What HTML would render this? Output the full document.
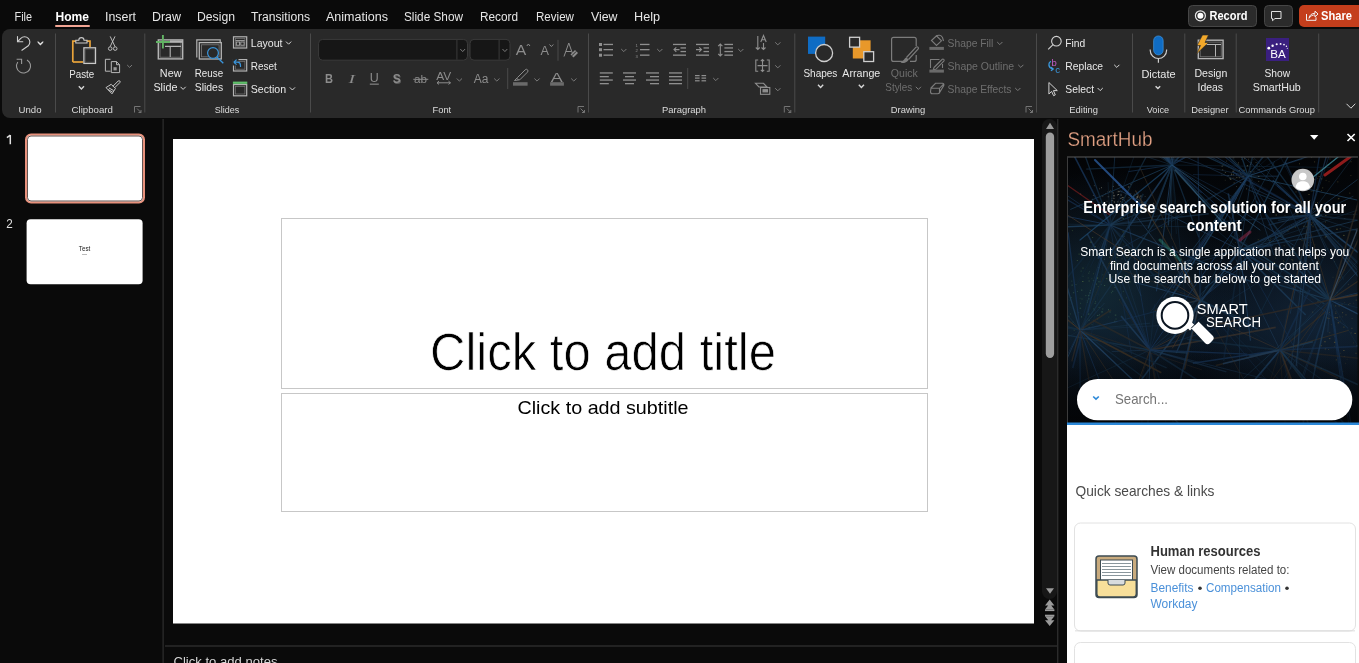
<!DOCTYPE html>
<html><head><meta charset="utf-8"><title>PowerPoint</title>
<style>
html,body{margin:0;padding:0;background:#0a0a0a;overflow:hidden;width:1359px;height:663px}
svg{display:block;font-family:"Liberation Sans",sans-serif;will-change:transform}
</style></head><body>
<svg width="1359" height="663" viewBox="0 0 1359 663">
<rect x="0" y="0" width="1359" height="663" fill="#0a0a0a"/>
<!-- ribbon -->
<path d="M10,29 H1359 V118 H10 A8,8 0 0 1 2,110 V37 A8,8 0 0 1 10,29 Z" fill="#292929"/>
<!-- menu tabs -->
<g fill="#e6e6e6" font-size="12.5">
<text x="14.5" y="20.5" textLength="17.5" lengthAdjust="spacingAndGlyphs">File</text>
<text x="55.5" y="20.5" textLength="33.5" lengthAdjust="spacingAndGlyphs" font-weight="bold" fill="#ffffff">Home</text>
<text x="105" y="20.5" textLength="31" lengthAdjust="spacingAndGlyphs">Insert</text>
<text x="152" y="20.5" textLength="29" lengthAdjust="spacingAndGlyphs">Draw</text>
<text x="197" y="20.5" textLength="38" lengthAdjust="spacingAndGlyphs">Design</text>
<text x="251" y="20.5" textLength="59" lengthAdjust="spacingAndGlyphs">Transitions</text>
<text x="326" y="20.5" textLength="62" lengthAdjust="spacingAndGlyphs">Animations</text>
<text x="404" y="20.5" textLength="59" lengthAdjust="spacingAndGlyphs">Slide Show</text>
<text x="480" y="20.5" textLength="38" lengthAdjust="spacingAndGlyphs">Record</text>
<text x="536" y="20.5" textLength="38" lengthAdjust="spacingAndGlyphs">Review</text>
<text x="591" y="20.5" textLength="26.5" lengthAdjust="spacingAndGlyphs">View</text>
<text x="634" y="20.5" textLength="26" lengthAdjust="spacingAndGlyphs">Help</text>
</g>
<rect x="55" y="25" width="35" height="2" rx="1" fill="#f2a594"/>
<!-- Record / comment / share buttons -->
<rect x="1188.5" y="5.5" width="68" height="21" rx="4" fill="#2b2b2b" stroke="#464646"/>
<circle cx="1200.4" cy="15.8" r="5" fill="none" stroke="#e6e6e6" stroke-width="1.2"/>
<circle cx="1200.4" cy="15.8" r="3" fill="#ffffff"/>
<text x="1209.5" y="20.2" font-size="12.5" font-weight="bold" fill="#ffffff" textLength="38" lengthAdjust="spacingAndGlyphs">Record</text>
<rect x="1264.5" y="5.5" width="28" height="21" rx="4" fill="#2b2b2b" stroke="#464646"/>
<path d="M1271.5,11.5 h9.5 v7 h-6 l-2.5,2.2 v-2.2 h-1 z" fill="none" stroke="#e0e0e0" stroke-width="1"/>
<rect x="1299" y="5" width="70" height="22" rx="5" fill="#c43e1c"/>
<g fill="none" stroke="#f0f0f0" stroke-width="1">
<path d="M1306.5,14 v6.3 h9.5 v-3"/>
<path d="M1309,18.3 c0.5,-3.5 3,-5 6,-5 v-2.2 l3,2.9 l-3,2.9 v-2 c-2.5,0 -4.5,1 -6,3.4z"/>
</g>
<text x="1321" y="20.2" font-size="12.5" font-weight="bold" fill="#ffffff" textLength="31" lengthAdjust="spacingAndGlyphs">Share</text>

<!-- slides pane divider -->
<rect x="162.6" y="119" width="1" height="544" fill="#353535"/>
<!-- thumbnails -->
<path d="M10.3,135 V144.3 M6.9,137.6 L10.3,135.2" fill="none" stroke="#e0e0e0" stroke-width="1.5"/>
<rect x="26" y="134.5" width="118" height="68" rx="5" fill="#ffffff" stroke="#e8917c" stroke-width="2"/>
<rect x="27.5" y="136" width="115" height="65" rx="3.5" fill="none" stroke="#3a2a26" stroke-width="0.8"/>
<text x="6.3" y="228" font-size="12.5" fill="#e0e0e0" textLength="6.5" lengthAdjust="spacingAndGlyphs">2</text>
<rect x="26.6" y="219.3" width="116" height="65" rx="4" fill="#ffffff"/>
<text x="78.8" y="251" font-size="6.5" fill="#222" textLength="11.5" lengthAdjust="spacingAndGlyphs">Test</text>
<rect x="82" y="254" width="5" height="1" fill="#bbb"/>
<!-- slide -->
<rect x="173" y="139" width="861" height="484.5" fill="#ffffff"/>
<rect x="281.5" y="218.5" width="646" height="170" fill="none" stroke="#8f8f8f" stroke-width="1" stroke-dasharray="1,1"/>
<rect x="281.5" y="393.5" width="646" height="118" fill="none" stroke="#8f8f8f" stroke-width="1" stroke-dasharray="1,1"/>
<text x="430" y="369.8" font-size="51" fill="#000" stroke="#fff" stroke-width="0.7" textLength="346" lengthAdjust="spacingAndGlyphs">Click to add title</text>
<text x="517.5" y="414" font-size="18.5" fill="#000" textLength="171" lengthAdjust="spacingAndGlyphs">Click to add subtitle</text>
<!-- scrollbar -->
<rect x="1042" y="119" width="15" height="480" rx="7.5" fill="#171717"/>
<path d="M1046,129 L1050,122.8 L1054,129 Z" fill="#9a9a9a"/>
<rect x="1045.8" y="132.5" width="8.3" height="225.5" rx="4.15" fill="#9e9e9e"/>
<path d="M1046,588.3 L1054,588.3 L1050,593.8 Z" fill="#9a9a9a"/>
<path d="M1045,605.5 L1049.7,599.6 L1054.4,605.5 Z M1045,609.5 L1049.7,603.6 L1054.4,609.5 Z" fill="#9a9a9a"/><rect x="1045" y="609.5" width="9.4" height="1.6" fill="#9a9a9a"/>
<rect x="1045" y="614.7" width="9.4" height="1.6" fill="#9a9a9a"/><path d="M1045,616.2 L1054.4,616.2 L1049.7,622 Z M1045,620.2 L1054.4,620.2 L1049.7,626 Z" fill="#9a9a9a"/>
<!-- editor / pane divider -->
<rect x="1057.3" y="119" width="1" height="544" fill="#3a3a3a"/>
<!-- notes -->
<rect x="165" y="645.5" width="892" height="1" fill="#3a3a3a"/>
<text x="173.5" y="666" font-size="13.5" fill="#d6d6d6" textLength="104" lengthAdjust="spacingAndGlyphs">Click to add notes</text>

<!-- Font boxes -->
<rect x="318.6" y="39.4" width="148.9" height="20.8" rx="4" fill="#161616" stroke="#3a3a3a" stroke-width="1"/>
<rect x="456.4" y="40" width="1" height="19.6" fill="#3a3a3a"/>
<rect x="470" y="39.4" width="40" height="20.8" rx="4" fill="#161616" stroke="#3a3a3a" stroke-width="1"/>
<rect x="498.6" y="40" width="1" height="19.6" fill="#3a3a3a"/>

<defs><clipPath id="heroclip"><rect x="1067.5" y="157" width="290" height="267"/></clipPath>
<linearGradient id="herog" x1="0" y1="0" x2="0" y2="1"><stop offset="0" stop-color="#030406"/><stop offset="0.3" stop-color="#05090e"/><stop offset="0.65" stop-color="#091420"/><stop offset="0.88" stop-color="#060b12"/><stop offset="1" stop-color="#030507"/></linearGradient>
<radialGradient id="heror" cx="0.12" cy="0.5" r="0.45"><stop offset="0" stop-color="#1a3a48" stop-opacity="0.55"/><stop offset="1" stop-color="#1a3048" stop-opacity="0"/></radialGradient>
<radialGradient id="heror2" cx="0.85" cy="0.6" r="0.45"><stop offset="0" stop-color="#1a3048" stop-opacity="0.5"/><stop offset="1" stop-color="#1a3048" stop-opacity="0"/></radialGradient></defs>
<rect x="1067.5" y="157" width="290" height="267" fill="url(#herog)"/>
<g clip-path="url(#heroclip)">
<rect x="1067.5" y="157" width="290" height="267" fill="url(#heror)"/>
<rect x="1067.5" y="157" width="290" height="267" fill="url(#heror2)"/>
<rect x="1082.5" y="267.6" width="1" height="1" fill="#6a8a4a" opacity="0.48"/>
<rect x="1097.7" y="253.3" width="1.5" height="1" fill="#6a8a4a" opacity="0.53"/>
<rect x="1112.7" y="251.4" width="1" height="0.8" fill="#6a8a4a" opacity="0.29"/>
<rect x="1122.7" y="231.4" width="0.8" height="1" fill="#6a8a4a" opacity="0.68"/>
<rect x="1092.3" y="237.2" width="0.8" height="0.8" fill="#6a8a4a" opacity="0.62"/>
<rect x="1115.6" y="262.1" width="0.8" height="0.8" fill="#6a8a4a" opacity="0.60"/>
<rect x="1096.1" y="283.7" width="0.8" height="0.8" fill="#6a8a4a" opacity="0.54"/>
<rect x="1076.8" y="260.0" width="1" height="1" fill="#6a8a4a" opacity="0.43"/>
<rect x="1060.6" y="245.3" width="0.8" height="1" fill="#6a8a4a" opacity="0.39"/>
<rect x="1112.4" y="276.4" width="0.8" height="0.8" fill="#6a8a4a" opacity="0.43"/>
<rect x="1122.7" y="243.8" width="0.8" height="0.8" fill="#6a8a4a" opacity="0.35"/>
<rect x="1116.6" y="257.1" width="1" height="1" fill="#6a8a4a" opacity="0.44"/>
<rect x="1096.3" y="254.6" width="1.5" height="1" fill="#6a8a4a" opacity="0.40"/>
<rect x="1108.5" y="263.2" width="1" height="0.8" fill="#6a8a4a" opacity="0.31"/>
<rect x="1109.1" y="257.1" width="1" height="1" fill="#6a8a4a" opacity="0.33"/>
<rect x="1087.2" y="252.1" width="0.8" height="0.8" fill="#6a8a4a" opacity="0.44"/>
<rect x="1093.2" y="273.4" width="0.8" height="0.8" fill="#6a8a4a" opacity="0.37"/>
<rect x="1149.9" y="253.4" width="1" height="0.8" fill="#6a8a4a" opacity="0.34"/>
<rect x="1075.2" y="284.2" width="1.5" height="0.8" fill="#6a8a4a" opacity="0.27"/>
<rect x="1124.7" y="277.2" width="0.8" height="1" fill="#6a8a4a" opacity="0.62"/>
<rect x="1103.3" y="265.2" width="0.8" height="0.8" fill="#6a8a4a" opacity="0.26"/>
<rect x="1088.7" y="280.5" width="0.8" height="1" fill="#6a8a4a" opacity="0.62"/>
<rect x="1124.6" y="274.9" width="1.5" height="0.8" fill="#6a8a4a" opacity="0.39"/>
<rect x="1114.2" y="287.2" width="1.5" height="0.8" fill="#6a8a4a" opacity="0.32"/>
<rect x="1090.3" y="241.6" width="1.5" height="1" fill="#6a8a4a" opacity="0.65"/>
<rect x="1091.3" y="247.3" width="0.8" height="0.8" fill="#6a8a4a" opacity="0.27"/>
<rect x="1126.2" y="256.6" width="1.5" height="1" fill="#6a8a4a" opacity="0.37"/>
<rect x="1123.5" y="235.9" width="1" height="0.8" fill="#6a8a4a" opacity="0.67"/>
<rect x="1121.6" y="258.5" width="1" height="0.8" fill="#6a8a4a" opacity="0.38"/>
<rect x="1123.2" y="253.3" width="0.8" height="0.8" fill="#6a8a4a" opacity="0.37"/>
<rect x="1102.5" y="262.4" width="0.8" height="1" fill="#6a8a4a" opacity="0.42"/>
<rect x="1099.3" y="255.3" width="1" height="0.8" fill="#6a8a4a" opacity="0.65"/>
<rect x="1142.7" y="256.4" width="1.5" height="0.8" fill="#6a8a4a" opacity="0.52"/>
<rect x="1132.6" y="249.5" width="1" height="1" fill="#6a8a4a" opacity="0.68"/>
<rect x="1141.7" y="263.8" width="1" height="0.8" fill="#6a8a4a" opacity="0.58"/>
<rect x="1073.8" y="329.6" width="0.8" height="1" fill="#6a8a4a" opacity="0.50"/>
<rect x="1106.1" y="217.2" width="1.5" height="0.8" fill="#6a8a4a" opacity="0.61"/>
<rect x="1128.0" y="250.5" width="1.5" height="1" fill="#6a8a4a" opacity="0.66"/>
<rect x="1126.1" y="244.9" width="0.8" height="1" fill="#6a8a4a" opacity="0.51"/>
<rect x="1094.4" y="246.1" width="1.5" height="0.8" fill="#6a8a4a" opacity="0.52"/>
<rect x="1138.1" y="273.8" width="1" height="1" fill="#6a8a4a" opacity="0.58"/>
<rect x="1082.0" y="281.0" width="1.5" height="1" fill="#6a8a4a" opacity="0.45"/>
<rect x="1115.0" y="252.9" width="1.5" height="0.8" fill="#6a8a4a" opacity="0.39"/>
<rect x="1114.1" y="262.2" width="1.5" height="0.8" fill="#6a8a4a" opacity="0.47"/>
<rect x="1071.9" y="230.3" width="1" height="0.8" fill="#6a8a4a" opacity="0.42"/>
<rect x="1129.2" y="281.5" width="1.5" height="0.8" fill="#6a8a4a" opacity="0.59"/>
<rect x="1081.5" y="298.6" width="1" height="0.8" fill="#6a8a4a" opacity="0.40"/>
<rect x="1102.5" y="248.5" width="1" height="0.8" fill="#6a8a4a" opacity="0.65"/>
<rect x="1087.7" y="277.6" width="1" height="0.8" fill="#6a8a4a" opacity="0.31"/>
<rect x="1067.1" y="260.8" width="0.8" height="0.8" fill="#6a8a4a" opacity="0.68"/>
<rect x="1107.7" y="272.0" width="1" height="1" fill="#6a8a4a" opacity="0.37"/>
<rect x="1115.2" y="280.2" width="1.5" height="1" fill="#6a8a4a" opacity="0.55"/>
<rect x="1100.9" y="222.4" width="1.5" height="1" fill="#6a8a4a" opacity="0.39"/>
<rect x="1118.6" y="245.8" width="1.5" height="0.8" fill="#6a8a4a" opacity="0.56"/>
<rect x="1105.9" y="278.3" width="1.5" height="0.8" fill="#6a8a4a" opacity="0.54"/>
<rect x="1097.9" y="267.3" width="1" height="0.8" fill="#6a8a4a" opacity="0.60"/>
<rect x="1128.8" y="205.0" width="0.8" height="1" fill="#6a8a4a" opacity="0.30"/>
<rect x="1078.6" y="253.7" width="1" height="0.8" fill="#6a8a4a" opacity="0.56"/>
<rect x="1118.0" y="281.6" width="0.8" height="0.8" fill="#6a8a4a" opacity="0.59"/>
<rect x="1104.0" y="258.8" width="0.8" height="1" fill="#6a8a4a" opacity="0.60"/>
<rect x="1057.2" y="248.0" width="1.5" height="0.8" fill="#6a8a4a" opacity="0.43"/>
<rect x="1122.7" y="218.0" width="0.8" height="1" fill="#6a8a4a" opacity="0.67"/>
<rect x="1108.0" y="249.6" width="1" height="0.8" fill="#6a8a4a" opacity="0.53"/>
<rect x="1128.5" y="249.6" width="1.5" height="1" fill="#6a8a4a" opacity="0.46"/>
<rect x="1101.1" y="249.0" width="1.5" height="0.8" fill="#6a8a4a" opacity="0.35"/>
<rect x="1161.1" y="227.0" width="1" height="1" fill="#6a8a4a" opacity="0.37"/>
<rect x="1109.2" y="256.5" width="1.5" height="0.8" fill="#6a8a4a" opacity="0.27"/>
<rect x="1097.1" y="277.5" width="1" height="1" fill="#6a8a4a" opacity="0.66"/>
<rect x="1119.0" y="299.4" width="1" height="0.8" fill="#6a8a4a" opacity="0.33"/>
<rect x="1089.8" y="290.3" width="0.8" height="1" fill="#6a8a4a" opacity="0.32"/>
<rect x="1066.1" y="297.5" width="1.5" height="1" fill="#4a7a5a" opacity="0.68"/>
<rect x="1053.4" y="301.7" width="0.8" height="0.8" fill="#4a7a5a" opacity="0.45"/>
<rect x="1063.6" y="289.8" width="1.5" height="0.8" fill="#4a7a5a" opacity="0.49"/>
<rect x="1100.7" y="284.0" width="1" height="1" fill="#4a7a5a" opacity="0.68"/>
<rect x="1104.1" y="285.0" width="1" height="0.8" fill="#4a7a5a" opacity="0.69"/>
<rect x="1070.7" y="297.0" width="0.8" height="1" fill="#4a7a5a" opacity="0.49"/>
<rect x="1069.6" y="299.6" width="0.8" height="0.8" fill="#4a7a5a" opacity="0.48"/>
<rect x="1068.1" y="315.8" width="1.5" height="0.8" fill="#4a7a5a" opacity="0.47"/>
<rect x="1088.0" y="294.8" width="1.5" height="1" fill="#4a7a5a" opacity="0.44"/>
<rect x="1122.8" y="290.9" width="1" height="0.8" fill="#4a7a5a" opacity="0.46"/>
<rect x="1101.2" y="311.4" width="1" height="1" fill="#4a7a5a" opacity="0.30"/>
<rect x="1086.8" y="301.8" width="1" height="0.8" fill="#4a7a5a" opacity="0.57"/>
<rect x="1094.0" y="299.4" width="0.8" height="0.8" fill="#4a7a5a" opacity="0.26"/>
<rect x="1084.9" y="323.5" width="0.8" height="1" fill="#4a7a5a" opacity="0.30"/>
<rect x="1089.1" y="292.4" width="1.5" height="1" fill="#4a7a5a" opacity="0.57"/>
<rect x="1080.7" y="270.6" width="0.8" height="1" fill="#4a7a5a" opacity="0.53"/>
<rect x="1099.4" y="281.5" width="1.5" height="0.8" fill="#4a7a5a" opacity="0.64"/>
<rect x="1079.7" y="297.8" width="0.8" height="0.8" fill="#4a7a5a" opacity="0.35"/>
<rect x="1088.4" y="272.7" width="0.8" height="1" fill="#4a7a5a" opacity="0.52"/>
<rect x="1097.6" y="293.7" width="0.8" height="0.8" fill="#4a7a5a" opacity="0.31"/>
<rect x="1091.6" y="324.1" width="1" height="1" fill="#4a7a5a" opacity="0.29"/>
<rect x="1097.7" y="286.3" width="1.5" height="0.8" fill="#4a7a5a" opacity="0.34"/>
<rect x="1071.4" y="280.7" width="0.8" height="0.8" fill="#4a7a5a" opacity="0.51"/>
<rect x="1072.6" y="321.7" width="1" height="0.8" fill="#4a7a5a" opacity="0.57"/>
<rect x="1080.9" y="289.7" width="1.5" height="0.8" fill="#4a7a5a" opacity="0.61"/>
<rect x="1086.7" y="300.4" width="1.5" height="1" fill="#4a7a5a" opacity="0.32"/>
<rect x="1094.1" y="309.3" width="0.8" height="1" fill="#4a7a5a" opacity="0.67"/>
<rect x="1094.4" y="303.0" width="1.5" height="1" fill="#4a7a5a" opacity="0.28"/>
<rect x="1102.3" y="308.5" width="1" height="1" fill="#4a7a5a" opacity="0.44"/>
<rect x="1088.0" y="298.5" width="1.5" height="0.8" fill="#4a7a5a" opacity="0.63"/>
<rect x="1096.9" y="315.0" width="1.5" height="1" fill="#4a7a5a" opacity="0.43"/>
<rect x="1093.0" y="308.5" width="1.5" height="0.8" fill="#4a7a5a" opacity="0.40"/>
<rect x="1114.8" y="314.6" width="1.5" height="1" fill="#4a7a5a" opacity="0.51"/>
<rect x="1097.2" y="318.5" width="1" height="1" fill="#4a7a5a" opacity="0.38"/>
<rect x="1108.4" y="316.5" width="0.8" height="1" fill="#4a7a5a" opacity="0.31"/>
<rect x="1081.0" y="316.4" width="1" height="1" fill="#4a7a5a" opacity="0.59"/>
<rect x="1070.1" y="313.4" width="0.8" height="1" fill="#4a7a5a" opacity="0.39"/>
<rect x="1115.3" y="318.6" width="1.5" height="0.8" fill="#4a7a5a" opacity="0.35"/>
<rect x="1110.9" y="292.4" width="1" height="0.8" fill="#4a7a5a" opacity="0.55"/>
<rect x="1073.2" y="292.2" width="1" height="1" fill="#4a7a5a" opacity="0.54"/>
<rect x="1082.3" y="275.8" width="1.5" height="0.8" fill="#4a7a5a" opacity="0.30"/>
<rect x="1098.6" y="306.9" width="1" height="1" fill="#4a7a5a" opacity="0.48"/>
<rect x="1091.5" y="278.4" width="0.8" height="0.8" fill="#4a7a5a" opacity="0.37"/>
<rect x="1087.8" y="313.5" width="1.5" height="1" fill="#4a7a5a" opacity="0.69"/>
<rect x="1045.5" y="279.7" width="1.5" height="1" fill="#4a7a5a" opacity="0.61"/>
<rect x="1108.0" y="309.3" width="0.8" height="1" fill="#4a7a5a" opacity="0.67"/>
<rect x="1099.1" y="314.3" width="0.8" height="1" fill="#4a7a5a" opacity="0.49"/>
<rect x="1076.9" y="290.9" width="1" height="1" fill="#4a7a5a" opacity="0.38"/>
<rect x="1079.6" y="307.7" width="1.5" height="1" fill="#4a7a5a" opacity="0.47"/>
<rect x="1085.7" y="334.3" width="1.5" height="1" fill="#4a7a5a" opacity="0.26"/>
<rect x="1092.8" y="280.3" width="1.5" height="0.8" fill="#4a7a5a" opacity="0.43"/>
<rect x="1088.0" y="295.5" width="1" height="1" fill="#4a7a5a" opacity="0.27"/>
<rect x="1126.0" y="297.5" width="0.8" height="0.8" fill="#4a7a5a" opacity="0.44"/>
<rect x="1050.0" y="305.7" width="0.8" height="0.8" fill="#4a7a5a" opacity="0.49"/>
<rect x="1112.2" y="290.8" width="1" height="0.8" fill="#4a7a5a" opacity="0.69"/>
<rect x="1098.3" y="281.4" width="0.8" height="0.8" fill="#4a7a5a" opacity="0.53"/>
<rect x="1080.3" y="302.8" width="0.8" height="1" fill="#4a7a5a" opacity="0.49"/>
<rect x="1101.5" y="311.4" width="1.5" height="1" fill="#4a7a5a" opacity="0.45"/>
<rect x="1088.5" y="319.8" width="1" height="1" fill="#4a7a5a" opacity="0.60"/>
<rect x="1038.8" y="290.0" width="1" height="0.8" fill="#4a7a5a" opacity="0.36"/>
<rect x="1113.9" y="320.8" width="1.5" height="1" fill="#4a7a5a" opacity="0.37"/>
<rect x="1071.4" y="284.7" width="1.5" height="0.8" fill="#4a7a5a" opacity="0.53"/>
<rect x="1090.2" y="290.3" width="0.8" height="0.8" fill="#4a7a5a" opacity="0.65"/>
<rect x="1095.1" y="301.3" width="1" height="1" fill="#4a7a5a" opacity="0.44"/>
<rect x="1085.0" y="295.1" width="1.5" height="1" fill="#4a7a5a" opacity="0.28"/>
<rect x="1109.3" y="311.6" width="1.5" height="0.8" fill="#4a7a5a" opacity="0.53"/>
<rect x="1078.0" y="312.2" width="0.8" height="1" fill="#4a7a5a" opacity="0.40"/>
<rect x="1089.1" y="271.4" width="0.8" height="0.8" fill="#4a7a5a" opacity="0.45"/>
<rect x="1102.5" y="274.3" width="0.8" height="1" fill="#4a7a5a" opacity="0.44"/>
<rect x="1088.6" y="327.3" width="1" height="0.8" fill="#4a7a5a" opacity="0.54"/>
<rect x="1337.7" y="198.5" width="1.5" height="0.8" fill="#7a7040" opacity="0.44"/>
<rect x="1313.8" y="208.3" width="1" height="0.8" fill="#7a7040" opacity="0.49"/>
<rect x="1296.4" y="213.4" width="1.5" height="1" fill="#7a7040" opacity="0.38"/>
<rect x="1321.3" y="190.2" width="0.8" height="0.8" fill="#7a7040" opacity="0.56"/>
<rect x="1286.0" y="201.4" width="1" height="1" fill="#7a7040" opacity="0.65"/>
<rect x="1325.7" y="235.9" width="1" height="1" fill="#7a7040" opacity="0.66"/>
<rect x="1310.5" y="224.2" width="1.5" height="1" fill="#7a7040" opacity="0.45"/>
<rect x="1325.6" y="179.9" width="1" height="0.8" fill="#7a7040" opacity="0.43"/>
<rect x="1358.9" y="178.8" width="0.8" height="0.8" fill="#7a7040" opacity="0.41"/>
<rect x="1307.4" y="217.8" width="1" height="1" fill="#7a7040" opacity="0.61"/>
<rect x="1318.7" y="176.1" width="1" height="0.8" fill="#7a7040" opacity="0.63"/>
<rect x="1308.5" y="194.0" width="1" height="1" fill="#7a7040" opacity="0.62"/>
<rect x="1321.2" y="208.5" width="0.8" height="1" fill="#7a7040" opacity="0.68"/>
<rect x="1299.0" y="163.3" width="0.8" height="1" fill="#7a7040" opacity="0.60"/>
<rect x="1327.1" y="205.2" width="1.5" height="0.8" fill="#7a7040" opacity="0.65"/>
<rect x="1344.4" y="218.0" width="0.8" height="0.8" fill="#7a7040" opacity="0.59"/>
<rect x="1311.1" y="184.9" width="0.8" height="1" fill="#7a7040" opacity="0.59"/>
<rect x="1286.3" y="194.3" width="1" height="1" fill="#7a7040" opacity="0.40"/>
<rect x="1349.3" y="192.6" width="1" height="1" fill="#7a7040" opacity="0.49"/>
<rect x="1314.3" y="161.4" width="0.8" height="1" fill="#7a7040" opacity="0.59"/>
<rect x="1338.5" y="197.9" width="0.8" height="1" fill="#7a7040" opacity="0.63"/>
<rect x="1358.5" y="159.5" width="1.5" height="0.8" fill="#7a7040" opacity="0.49"/>
<rect x="1311.1" y="156.4" width="1" height="1" fill="#7a7040" opacity="0.66"/>
<rect x="1320.3" y="214.9" width="1.5" height="1" fill="#7a7040" opacity="0.56"/>
<rect x="1311.4" y="222.4" width="1.5" height="1" fill="#7a7040" opacity="0.37"/>
<rect x="1337.0" y="181.5" width="1.5" height="0.8" fill="#7a7040" opacity="0.39"/>
<rect x="1345.1" y="246.5" width="0.8" height="1" fill="#7a7040" opacity="0.26"/>
<rect x="1284.3" y="205.3" width="1" height="0.8" fill="#7a7040" opacity="0.34"/>
<rect x="1303.1" y="225.8" width="1.5" height="1" fill="#7a7040" opacity="0.52"/>
<rect x="1322.1" y="215.8" width="1" height="1" fill="#7a7040" opacity="0.33"/>
<rect x="1320.8" y="178.4" width="1.5" height="1" fill="#7a7040" opacity="0.63"/>
<rect x="1299.8" y="202.4" width="1" height="0.8" fill="#7a7040" opacity="0.47"/>
<rect x="1321.2" y="207.9" width="0.8" height="1" fill="#7a7040" opacity="0.69"/>
<rect x="1329.6" y="158.6" width="0.8" height="0.8" fill="#7a7040" opacity="0.65"/>
<rect x="1350.5" y="161.4" width="1" height="0.8" fill="#7a7040" opacity="0.57"/>
<rect x="1310.8" y="191.0" width="0.8" height="1" fill="#7a7040" opacity="0.32"/>
<rect x="1350.5" y="175.1" width="0.8" height="1" fill="#7a7040" opacity="0.48"/>
<rect x="1344.6" y="210.6" width="0.8" height="0.8" fill="#7a7040" opacity="0.34"/>
<rect x="1329.8" y="192.9" width="0.8" height="0.8" fill="#7a7040" opacity="0.41"/>
<rect x="1301.6" y="179.8" width="1" height="1" fill="#7a7040" opacity="0.29"/>
<rect x="1319.8" y="168.7" width="1.5" height="1" fill="#7a7040" opacity="0.26"/>
<rect x="1325.0" y="215.1" width="1.5" height="0.8" fill="#7a7040" opacity="0.60"/>
<rect x="1314.9" y="202.5" width="1" height="1" fill="#7a7040" opacity="0.32"/>
<rect x="1328.5" y="181.2" width="1" height="1" fill="#7a7040" opacity="0.28"/>
<rect x="1312.3" y="226.4" width="1.5" height="0.8" fill="#7a7040" opacity="0.41"/>
<rect x="1316.4" y="189.1" width="1" height="1" fill="#7a7040" opacity="0.59"/>
<rect x="1322.2" y="187.5" width="1" height="0.8" fill="#7a7040" opacity="0.64"/>
<rect x="1314.6" y="172.4" width="1" height="0.8" fill="#7a7040" opacity="0.46"/>
<rect x="1381.7" y="205.1" width="1.5" height="0.8" fill="#7a7040" opacity="0.66"/>
<rect x="1336.2" y="228.7" width="1.5" height="1" fill="#7a7040" opacity="0.68"/>
<rect x="1320.8" y="168.2" width="0.8" height="1" fill="#7a7040" opacity="0.33"/>
<rect x="1313.1" y="208.4" width="1" height="1" fill="#7a7040" opacity="0.50"/>
<rect x="1317.1" y="177.9" width="1" height="0.8" fill="#7a7040" opacity="0.30"/>
<rect x="1312.3" y="190.8" width="1.5" height="0.8" fill="#7a7040" opacity="0.33"/>
<rect x="1288.9" y="227.4" width="1.5" height="0.8" fill="#7a7040" opacity="0.30"/>
<rect x="1377.9" y="214.9" width="1" height="1" fill="#7a7040" opacity="0.60"/>
<rect x="1299.7" y="239.0" width="1.5" height="0.8" fill="#7a7040" opacity="0.54"/>
<rect x="1323.9" y="153.9" width="1" height="1" fill="#7a7040" opacity="0.40"/>
<rect x="1317.0" y="202.3" width="1" height="1" fill="#7a7040" opacity="0.69"/>
<rect x="1327.2" y="164.4" width="1.5" height="0.8" fill="#7a7040" opacity="0.37"/>
<rect x="1326.4" y="219.8" width="1" height="0.8" fill="#7a7040" opacity="0.50"/>
<rect x="1325.0" y="221.6" width="1" height="0.8" fill="#7a7040" opacity="0.53"/>
<rect x="1338.6" y="235.8" width="1" height="0.8" fill="#7a7040" opacity="0.41"/>
<rect x="1308.9" y="200.0" width="1.5" height="0.8" fill="#7a7040" opacity="0.69"/>
<rect x="1288.5" y="196.0" width="0.8" height="0.8" fill="#7a7040" opacity="0.53"/>
<rect x="1322.7" y="209.9" width="0.8" height="1" fill="#7a7040" opacity="0.51"/>
<rect x="1314.2" y="178.9" width="1" height="1" fill="#7a7040" opacity="0.46"/>
<rect x="1358.4" y="247.4" width="0.8" height="0.8" fill="#7a7040" opacity="0.66"/>
<rect x="1295.3" y="191.4" width="1.5" height="1" fill="#7a7040" opacity="0.33"/>
<rect x="1318.9" y="146.7" width="1" height="0.8" fill="#7a7040" opacity="0.31"/>
<rect x="1308.4" y="235.3" width="1" height="0.8" fill="#6a6a3a" opacity="0.59"/>
<rect x="1291.2" y="259.1" width="1.5" height="0.8" fill="#6a6a3a" opacity="0.45"/>
<rect x="1267.7" y="269.9" width="1.5" height="0.8" fill="#6a6a3a" opacity="0.39"/>
<rect x="1282.5" y="221.2" width="1" height="0.8" fill="#6a6a3a" opacity="0.32"/>
<rect x="1295.0" y="252.7" width="1.5" height="1" fill="#6a6a3a" opacity="0.30"/>
<rect x="1283.1" y="260.1" width="0.8" height="1" fill="#6a6a3a" opacity="0.36"/>
<rect x="1306.8" y="247.2" width="0.8" height="0.8" fill="#6a6a3a" opacity="0.43"/>
<rect x="1289.5" y="250.1" width="1" height="1" fill="#6a6a3a" opacity="0.65"/>
<rect x="1324.8" y="236.6" width="1" height="1" fill="#6a6a3a" opacity="0.47"/>
<rect x="1342.9" y="248.7" width="1.5" height="1" fill="#6a6a3a" opacity="0.62"/>
<rect x="1308.2" y="256.6" width="1.5" height="1" fill="#6a6a3a" opacity="0.49"/>
<rect x="1255.6" y="267.9" width="1" height="0.8" fill="#6a6a3a" opacity="0.38"/>
<rect x="1282.1" y="235.8" width="1" height="1" fill="#6a6a3a" opacity="0.59"/>
<rect x="1289.8" y="275.3" width="0.8" height="0.8" fill="#6a6a3a" opacity="0.31"/>
<rect x="1274.9" y="257.7" width="1" height="0.8" fill="#6a6a3a" opacity="0.46"/>
<rect x="1338.9" y="277.0" width="1.5" height="1" fill="#6a6a3a" opacity="0.55"/>
<rect x="1343.1" y="234.9" width="1.5" height="1" fill="#6a6a3a" opacity="0.64"/>
<rect x="1264.2" y="267.1" width="0.8" height="1" fill="#6a6a3a" opacity="0.51"/>
<rect x="1308.4" y="244.8" width="0.8" height="0.8" fill="#6a6a3a" opacity="0.65"/>
<rect x="1278.0" y="239.9" width="1" height="0.8" fill="#6a6a3a" opacity="0.58"/>
<rect x="1313.7" y="251.8" width="1" height="1" fill="#6a6a3a" opacity="0.62"/>
<rect x="1283.1" y="261.3" width="1.5" height="0.8" fill="#6a6a3a" opacity="0.27"/>
<rect x="1347.2" y="258.3" width="1" height="1" fill="#6a6a3a" opacity="0.47"/>
<rect x="1356.6" y="227.8" width="1" height="0.8" fill="#6a6a3a" opacity="0.34"/>
<rect x="1321.9" y="226.2" width="0.8" height="0.8" fill="#6a6a3a" opacity="0.39"/>
<rect x="1330.5" y="216.8" width="0.8" height="0.8" fill="#6a6a3a" opacity="0.54"/>
<rect x="1290.7" y="225.7" width="1.5" height="0.8" fill="#6a6a3a" opacity="0.34"/>
<rect x="1305.3" y="245.6" width="0.8" height="1" fill="#6a6a3a" opacity="0.58"/>
<rect x="1281.4" y="289.6" width="1" height="0.8" fill="#6a6a3a" opacity="0.40"/>
<rect x="1337.7" y="240.7" width="1" height="0.8" fill="#6a6a3a" opacity="0.33"/>
<rect x="1307.4" y="242.2" width="1.5" height="0.8" fill="#6a6a3a" opacity="0.37"/>
<rect x="1295.0" y="226.8" width="1" height="1" fill="#6a6a3a" opacity="0.42"/>
<rect x="1275.5" y="214.6" width="1.5" height="0.8" fill="#6a6a3a" opacity="0.69"/>
<rect x="1311.2" y="242.3" width="0.8" height="1" fill="#6a6a3a" opacity="0.31"/>
<rect x="1287.6" y="230.6" width="0.8" height="1" fill="#6a6a3a" opacity="0.66"/>
<rect x="1343.9" y="269.5" width="0.8" height="1" fill="#6a6a3a" opacity="0.49"/>
<rect x="1274.1" y="262.0" width="0.8" height="1" fill="#6a6a3a" opacity="0.69"/>
<rect x="1305.2" y="261.7" width="1.5" height="0.8" fill="#6a6a3a" opacity="0.33"/>
<rect x="1353.3" y="214.2" width="0.8" height="1" fill="#6a6a3a" opacity="0.66"/>
<rect x="1298.6" y="249.3" width="1" height="0.8" fill="#6a6a3a" opacity="0.33"/>
<rect x="1269.6" y="240.1" width="1" height="1" fill="#6a6a3a" opacity="0.55"/>
<rect x="1305.6" y="226.4" width="1.5" height="0.8" fill="#6a6a3a" opacity="0.52"/>
<rect x="1301.5" y="240.3" width="1" height="0.8" fill="#6a6a3a" opacity="0.55"/>
<rect x="1283.5" y="245.4" width="1.5" height="0.8" fill="#6a6a3a" opacity="0.37"/>
<rect x="1257.7" y="239.3" width="1.5" height="1" fill="#6a6a3a" opacity="0.37"/>
<rect x="1317.6" y="300.8" width="0.8" height="1" fill="#6a6a3a" opacity="0.64"/>
<rect x="1305.5" y="260.4" width="0.8" height="1" fill="#6a6a3a" opacity="0.61"/>
<rect x="1264.0" y="249.3" width="0.8" height="0.8" fill="#6a6a3a" opacity="0.30"/>
<rect x="1314.0" y="275.7" width="1.5" height="0.8" fill="#6a6a3a" opacity="0.53"/>
<rect x="1322.3" y="257.0" width="1.5" height="1" fill="#6a6a3a" opacity="0.62"/>
<rect x="1297.2" y="215.3" width="1.5" height="1" fill="#6a6a3a" opacity="0.29"/>
<rect x="1305.9" y="238.9" width="1" height="0.8" fill="#6a6a3a" opacity="0.32"/>
<rect x="1284.5" y="214.9" width="1" height="0.8" fill="#6a6a3a" opacity="0.39"/>
<rect x="1265.9" y="256.4" width="1.5" height="0.8" fill="#6a6a3a" opacity="0.31"/>
<rect x="1301.0" y="222.9" width="0.8" height="0.8" fill="#6a6a3a" opacity="0.59"/>
<rect x="1235.1" y="242.1" width="0.8" height="0.8" fill="#6a6a3a" opacity="0.43"/>
<rect x="1290.3" y="248.6" width="1.5" height="1" fill="#6a6a3a" opacity="0.46"/>
<rect x="1355.2" y="229.0" width="1.5" height="0.8" fill="#6a6a3a" opacity="0.38"/>
<rect x="1332.5" y="276.7" width="1" height="1" fill="#6a6a3a" opacity="0.29"/>
<rect x="1302.8" y="267.0" width="1.5" height="0.8" fill="#6a6a3a" opacity="0.27"/>
<rect x="1273.3" y="266.6" width="0.8" height="1" fill="#6a6a3a" opacity="0.51"/>
<rect x="1339.8" y="228.2" width="0.8" height="1" fill="#6a6a3a" opacity="0.64"/>
<rect x="1314.3" y="244.5" width="1" height="0.8" fill="#6a6a3a" opacity="0.35"/>
<rect x="1291.8" y="260.4" width="1.5" height="0.8" fill="#6a6a3a" opacity="0.47"/>
<rect x="1275.5" y="265.8" width="1" height="1" fill="#6a6a3a" opacity="0.45"/>
<rect x="1333.9" y="248.7" width="1" height="0.8" fill="#6a6a3a" opacity="0.49"/>
<rect x="1293.9" y="253.0" width="1" height="1" fill="#6a6a3a" opacity="0.68"/>
<rect x="1280.3" y="233.3" width="1.5" height="1" fill="#6a6a3a" opacity="0.48"/>
<rect x="1270.3" y="238.1" width="0.8" height="1" fill="#6a6a3a" opacity="0.30"/>
<rect x="1334.0" y="261.4" width="1" height="0.8" fill="#6a6a3a" opacity="0.59"/>
<rect x="1236.4" y="153.9" width="0.8" height="1" fill="#8a8a6a" opacity="0.63"/>
<rect x="1221.3" y="174.6" width="1" height="1" fill="#8a8a6a" opacity="0.37"/>
<rect x="1250.8" y="162.3" width="1" height="1" fill="#8a8a6a" opacity="0.52"/>
<rect x="1233.6" y="170.4" width="1.5" height="0.8" fill="#8a8a6a" opacity="0.26"/>
<rect x="1236.0" y="177.3" width="1.5" height="0.8" fill="#8a8a6a" opacity="0.48"/>
<rect x="1231.7" y="168.1" width="1" height="1" fill="#8a8a6a" opacity="0.32"/>
<rect x="1242.3" y="175.8" width="1.5" height="1" fill="#8a8a6a" opacity="0.43"/>
<rect x="1224.8" y="179.8" width="0.8" height="0.8" fill="#8a8a6a" opacity="0.38"/>
<rect x="1236.1" y="174.3" width="0.8" height="0.8" fill="#8a8a6a" opacity="0.59"/>
<rect x="1238.5" y="170.1" width="1.5" height="1" fill="#8a8a6a" opacity="0.55"/>
<rect x="1257.9" y="176.0" width="1.5" height="1" fill="#8a8a6a" opacity="0.55"/>
<rect x="1259.3" y="165.8" width="0.8" height="1" fill="#8a8a6a" opacity="0.29"/>
<rect x="1231.0" y="173.3" width="0.8" height="1" fill="#8a8a6a" opacity="0.42"/>
<rect x="1234.5" y="177.8" width="1" height="0.8" fill="#8a8a6a" opacity="0.32"/>
<rect x="1230.7" y="174.9" width="0.8" height="1" fill="#8a8a6a" opacity="0.55"/>
<rect x="1240.3" y="173.3" width="1" height="1" fill="#8a8a6a" opacity="0.61"/>
<rect x="1232.4" y="170.8" width="1.5" height="1" fill="#8a8a6a" opacity="0.57"/>
<rect x="1249.9" y="171.1" width="1" height="0.8" fill="#8a8a6a" opacity="0.66"/>
<rect x="1238.7" y="177.2" width="1.5" height="1" fill="#8a8a6a" opacity="0.46"/>
<rect x="1236.5" y="175.1" width="0.8" height="0.8" fill="#8a8a6a" opacity="0.41"/>
<rect x="1250.0" y="163.9" width="1" height="0.8" fill="#8a8a6a" opacity="0.54"/>
<rect x="1233.2" y="174.6" width="1" height="0.8" fill="#8a8a6a" opacity="0.51"/>
<rect x="1256.1" y="165.4" width="1.5" height="0.8" fill="#8a8a6a" opacity="0.53"/>
<rect x="1231.2" y="174.1" width="1" height="0.8" fill="#8a8a6a" opacity="0.62"/>
<rect x="1247.1" y="165.0" width="1" height="0.8" fill="#8a8a6a" opacity="0.61"/>
<rect x="1236.8" y="164.5" width="1" height="1" fill="#8a8a6a" opacity="0.46"/>
<rect x="1253.5" y="171.4" width="1" height="0.8" fill="#8a8a6a" opacity="0.37"/>
<rect x="1242.3" y="178.9" width="1.5" height="1" fill="#8a8a6a" opacity="0.25"/>
<rect x="1221.4" y="165.8" width="1.5" height="0.8" fill="#8a8a6a" opacity="0.53"/>
<rect x="1222.5" y="164.7" width="1" height="1" fill="#8a8a6a" opacity="0.41"/>
<rect x="1246.6" y="165.7" width="1.5" height="0.8" fill="#8a8a6a" opacity="0.56"/>
<rect x="1230.0" y="152.2" width="0.8" height="0.8" fill="#8a8a6a" opacity="0.40"/>
<rect x="1233.3" y="157.4" width="1" height="1" fill="#8a8a6a" opacity="0.44"/>
<rect x="1230.1" y="178.3" width="1" height="0.8" fill="#8a8a6a" opacity="0.54"/>
<rect x="1229.9" y="178.9" width="1.5" height="0.8" fill="#8a8a6a" opacity="0.64"/>
<rect x="1258.4" y="169.1" width="1.5" height="1" fill="#8a8a6a" opacity="0.30"/>
<rect x="1223.6" y="173.9" width="1" height="0.8" fill="#8a8a6a" opacity="0.32"/>
<rect x="1253.5" y="158.7" width="0.8" height="1" fill="#8a8a6a" opacity="0.36"/>
<rect x="1222.2" y="169.4" width="1" height="1" fill="#8a8a6a" opacity="0.57"/>
<rect x="1239.8" y="181.9" width="1" height="0.8" fill="#8a8a6a" opacity="0.40"/>
<rect x="1241.1" y="155.6" width="0.8" height="1" fill="#8a8a6a" opacity="0.54"/>
<rect x="1251.6" y="178.7" width="1" height="0.8" fill="#8a8a6a" opacity="0.31"/>
<rect x="1229.4" y="177.8" width="0.8" height="0.8" fill="#8a8a6a" opacity="0.69"/>
<rect x="1224.9" y="172.0" width="0.8" height="1" fill="#8a8a6a" opacity="0.56"/>
<rect x="1227.6" y="175.1" width="1" height="1" fill="#8a8a6a" opacity="0.67"/>
<rect x="1243.2" y="169.8" width="1.5" height="0.8" fill="#8a8a6a" opacity="0.64"/>
<rect x="1243.2" y="176.6" width="1.5" height="0.8" fill="#8a8a6a" opacity="0.43"/>
<rect x="1255.6" y="162.0" width="1" height="0.8" fill="#8a8a6a" opacity="0.42"/>
<rect x="1233.5" y="182.5" width="1.5" height="1" fill="#8a8a6a" opacity="0.35"/>
<rect x="1238.2" y="162.4" width="0.8" height="1" fill="#8a8a6a" opacity="0.55"/>
<rect x="1241.7" y="176.0" width="0.8" height="1" fill="#8a8a6a" opacity="0.33"/>
<rect x="1258.2" y="180.9" width="1" height="1" fill="#8a8a6a" opacity="0.44"/>
<rect x="1252.0" y="182.7" width="1" height="0.8" fill="#8a8a6a" opacity="0.37"/>
<rect x="1232.9" y="173.9" width="0.8" height="1" fill="#8a8a6a" opacity="0.34"/>
<rect x="1227.9" y="167.0" width="0.8" height="0.8" fill="#8a8a6a" opacity="0.25"/>
<rect x="1241.0" y="158.9" width="0.8" height="0.8" fill="#8a8a6a" opacity="0.40"/>
<rect x="1251.3" y="180.2" width="1" height="1" fill="#8a8a6a" opacity="0.26"/>
<rect x="1232.4" y="177.7" width="1.5" height="0.8" fill="#8a8a6a" opacity="0.35"/>
<rect x="1226.1" y="160.6" width="1" height="1" fill="#8a8a6a" opacity="0.33"/>
<rect x="1238.1" y="175.5" width="1" height="0.8" fill="#8a8a6a" opacity="0.33"/>
<rect x="1246.0" y="170.8" width="0.8" height="0.8" fill="#8a8a6a" opacity="0.37"/>
<rect x="1252.6" y="171.4" width="0.8" height="1" fill="#8a8a6a" opacity="0.25"/>
<rect x="1246.3" y="188.4" width="0.8" height="1" fill="#8a8a6a" opacity="0.61"/>
<rect x="1244.3" y="158.2" width="1" height="1" fill="#8a8a6a" opacity="0.61"/>
<rect x="1248.0" y="158.7" width="0.8" height="1" fill="#8a8a6a" opacity="0.43"/>
<rect x="1237.9" y="164.5" width="1.5" height="0.8" fill="#8a8a6a" opacity="0.25"/>
<rect x="1245.6" y="175.1" width="1.5" height="1" fill="#8a8a6a" opacity="0.48"/>
<rect x="1234.8" y="193.1" width="1.5" height="1" fill="#8a8a6a" opacity="0.41"/>
<rect x="1236.0" y="186.0" width="1" height="0.8" fill="#8a8a6a" opacity="0.37"/>
<rect x="1241.4" y="174.6" width="0.8" height="0.8" fill="#8a8a6a" opacity="0.50"/>
<rect x="1116.7" y="191.6" width="0.8" height="0.8" fill="#9a9a8a" opacity="0.31"/>
<rect x="1112.2" y="200.1" width="0.8" height="1" fill="#9a9a8a" opacity="0.48"/>
<rect x="1111.0" y="198.0" width="1.5" height="0.8" fill="#9a9a8a" opacity="0.26"/>
<rect x="1122.1" y="197.0" width="1.5" height="0.8" fill="#9a9a8a" opacity="0.51"/>
<rect x="1113.8" y="201.1" width="0.8" height="1" fill="#9a9a8a" opacity="0.43"/>
<rect x="1117.9" y="191.4" width="1" height="0.8" fill="#9a9a8a" opacity="0.55"/>
<rect x="1130.4" y="193.3" width="0.8" height="1" fill="#9a9a8a" opacity="0.49"/>
<rect x="1140.2" y="195.6" width="1.5" height="1" fill="#9a9a8a" opacity="0.66"/>
<rect x="1136.3" y="197.8" width="1" height="1" fill="#9a9a8a" opacity="0.64"/>
<rect x="1109.8" y="189.9" width="1.5" height="0.8" fill="#9a9a8a" opacity="0.30"/>
<rect x="1118.5" y="185.1" width="1" height="1" fill="#9a9a8a" opacity="0.44"/>
<rect x="1113.2" y="197.9" width="1.5" height="0.8" fill="#9a9a8a" opacity="0.48"/>
<rect x="1137.2" y="196.7" width="1" height="1" fill="#9a9a8a" opacity="0.52"/>
<rect x="1096.0" y="187.2" width="0.8" height="1" fill="#9a9a8a" opacity="0.40"/>
<rect x="1119.3" y="203.4" width="0.8" height="1" fill="#9a9a8a" opacity="0.70"/>
<rect x="1099.5" y="202.0" width="0.8" height="1" fill="#9a9a8a" opacity="0.30"/>
<rect x="1131.0" y="207.6" width="0.8" height="0.8" fill="#9a9a8a" opacity="0.61"/>
<rect x="1080.3" y="193.6" width="0.8" height="0.8" fill="#9a9a8a" opacity="0.64"/>
<rect x="1117.7" y="190.6" width="1" height="1" fill="#9a9a8a" opacity="0.34"/>
<rect x="1133.1" y="195.6" width="1" height="1" fill="#9a9a8a" opacity="0.68"/>
<rect x="1120.4" y="197.9" width="1" height="1" fill="#9a9a8a" opacity="0.64"/>
<rect x="1133.2" y="198.1" width="0.8" height="0.8" fill="#9a9a8a" opacity="0.61"/>
<rect x="1126.9" y="199.7" width="0.8" height="1" fill="#9a9a8a" opacity="0.27"/>
<rect x="1105.8" y="204.9" width="1" height="0.8" fill="#9a9a8a" opacity="0.44"/>
<rect x="1117.6" y="194.0" width="1.5" height="1" fill="#9a9a8a" opacity="0.66"/>
<rect x="1153.4" y="202.8" width="0.8" height="1" fill="#9a9a8a" opacity="0.64"/>
<rect x="1118.8" y="191.1" width="1.5" height="1" fill="#9a9a8a" opacity="0.42"/>
<rect x="1127.9" y="186.5" width="1.5" height="1" fill="#9a9a8a" opacity="0.55"/>
<rect x="1122.2" y="199.0" width="0.8" height="0.8" fill="#9a9a8a" opacity="0.56"/>
<rect x="1113.6" y="195.7" width="0.8" height="1" fill="#9a9a8a" opacity="0.67"/>
<rect x="1110.9" y="191.4" width="0.8" height="0.8" fill="#9a9a8a" opacity="0.70"/>
<rect x="1112.7" y="185.9" width="1" height="1" fill="#9a9a8a" opacity="0.60"/>
<rect x="1121.5" y="197.2" width="1" height="1" fill="#9a9a8a" opacity="0.42"/>
<rect x="1112.3" y="191.8" width="0.8" height="0.8" fill="#9a9a8a" opacity="0.67"/>
<rect x="1108.9" y="202.7" width="0.8" height="1" fill="#9a9a8a" opacity="0.51"/>
<rect x="1114.5" y="206.9" width="1" height="0.8" fill="#9a9a8a" opacity="0.55"/>
<rect x="1092.0" y="198.9" width="1" height="0.8" fill="#9a9a8a" opacity="0.58"/>
<rect x="1109.0" y="191.1" width="0.8" height="1" fill="#9a9a8a" opacity="0.44"/>
<rect x="1117.4" y="201.3" width="1" height="1" fill="#9a9a8a" opacity="0.55"/>
<rect x="1137.1" y="195.7" width="0.8" height="1" fill="#9a9a8a" opacity="0.42"/>
<rect x="1099.1" y="188.3" width="1" height="1" fill="#9a9a8a" opacity="0.38"/>
<rect x="1140.6" y="202.4" width="1.5" height="0.8" fill="#9a9a8a" opacity="0.50"/>
<rect x="1141.6" y="202.5" width="0.8" height="1" fill="#9a9a8a" opacity="0.26"/>
<rect x="1136.4" y="196.5" width="1.5" height="1" fill="#9a9a8a" opacity="0.70"/>
<rect x="1130.2" y="183.8" width="1.5" height="0.8" fill="#9a9a8a" opacity="0.46"/>
<rect x="1111.0" y="200.1" width="1" height="1" fill="#9a9a8a" opacity="0.55"/>
<rect x="1093.9" y="185.2" width="0.8" height="1" fill="#9a9a8a" opacity="0.45"/>
<rect x="1122.0" y="202.4" width="0.8" height="0.8" fill="#9a9a8a" opacity="0.28"/>
<rect x="1107.7" y="196.4" width="1.5" height="0.8" fill="#9a9a8a" opacity="0.48"/>
<rect x="1107.3" y="191.4" width="0.8" height="1" fill="#9a9a8a" opacity="0.29"/>
<rect x="1120.3" y="194.5" width="1.5" height="1" fill="#9a9a8a" opacity="0.55"/>
<rect x="1133.9" y="193.7" width="0.8" height="1" fill="#9a9a8a" opacity="0.46"/>
<rect x="1144.7" y="196.2" width="0.8" height="0.8" fill="#9a9a8a" opacity="0.41"/>
<rect x="1105.0" y="193.3" width="0.8" height="0.8" fill="#9a9a8a" opacity="0.39"/>
<rect x="1113.6" y="194.9" width="1.5" height="0.8" fill="#9a9a8a" opacity="0.31"/>
<rect x="1132.7" y="198.8" width="1" height="1" fill="#9a9a8a" opacity="0.60"/>
<rect x="1120.3" y="201.2" width="0.8" height="0.8" fill="#9a9a8a" opacity="0.51"/>
<rect x="1122.8" y="197.5" width="0.8" height="0.8" fill="#9a9a8a" opacity="0.61"/>
<rect x="1113.0" y="194.9" width="1.5" height="0.8" fill="#9a9a8a" opacity="0.43"/>
<rect x="1101.0" y="187.2" width="0.8" height="1" fill="#9a9a8a" opacity="0.62"/>
<rect x="1123.0" y="205.6" width="0.8" height="1" fill="#9a9a8a" opacity="0.32"/>
<rect x="1117.0" y="194.7" width="0.8" height="1" fill="#9a9a8a" opacity="0.39"/>
<rect x="1137.5" y="193.2" width="0.8" height="1" fill="#9a9a8a" opacity="0.44"/>
<rect x="1128.6" y="197.2" width="0.8" height="1" fill="#9a9a8a" opacity="0.40"/>
<rect x="1101.8" y="195.6" width="1.5" height="0.8" fill="#9a9a8a" opacity="0.51"/>
<rect x="1092.9" y="194.9" width="1" height="1" fill="#9a9a8a" opacity="0.37"/>
<rect x="1112.9" y="192.5" width="0.8" height="1" fill="#9a9a8a" opacity="0.61"/>
<rect x="1106.5" y="200.8" width="1" height="1" fill="#9a9a8a" opacity="0.30"/>
<rect x="1114.2" y="201.8" width="0.8" height="1" fill="#9a9a8a" opacity="0.50"/>
<rect x="1112.8" y="197.5" width="0.8" height="1" fill="#9a9a8a" opacity="0.26"/>
<rect x="1320.5" y="367.9" width="1.5" height="1" fill="#7a6a3a" opacity="0.58"/>
<rect x="1328.3" y="349.2" width="0.8" height="0.8" fill="#7a6a3a" opacity="0.56"/>
<rect x="1334.1" y="341.8" width="1.5" height="1" fill="#7a6a3a" opacity="0.63"/>
<rect x="1345.3" y="362.8" width="0.8" height="1" fill="#7a6a3a" opacity="0.33"/>
<rect x="1355.5" y="352.8" width="1" height="0.8" fill="#7a6a3a" opacity="0.64"/>
<rect x="1343.8" y="356.0" width="1" height="1" fill="#7a6a3a" opacity="0.43"/>
<rect x="1335.8" y="359.4" width="0.8" height="1" fill="#7a6a3a" opacity="0.69"/>
<rect x="1345.5" y="314.5" width="1" height="0.8" fill="#7a6a3a" opacity="0.62"/>
<rect x="1344.3" y="302.1" width="0.8" height="1" fill="#7a6a3a" opacity="0.27"/>
<rect x="1328.8" y="312.1" width="1" height="0.8" fill="#7a6a3a" opacity="0.53"/>
<rect x="1336.5" y="317.4" width="1.5" height="0.8" fill="#7a6a3a" opacity="0.62"/>
<rect x="1328.8" y="332.4" width="1.5" height="0.8" fill="#7a6a3a" opacity="0.33"/>
<rect x="1356.5" y="345.2" width="0.8" height="1" fill="#7a6a3a" opacity="0.59"/>
<rect x="1330.1" y="297.7" width="1" height="1" fill="#7a6a3a" opacity="0.65"/>
<rect x="1336.7" y="292.4" width="1" height="0.8" fill="#7a6a3a" opacity="0.57"/>
<rect x="1324.7" y="348.5" width="1.5" height="0.8" fill="#7a6a3a" opacity="0.67"/>
<rect x="1343.1" y="350.1" width="1.5" height="0.8" fill="#7a6a3a" opacity="0.63"/>
<rect x="1358.2" y="358.5" width="1" height="1" fill="#7a6a3a" opacity="0.26"/>
<rect x="1328.9" y="338.1" width="1.5" height="1" fill="#7a6a3a" opacity="0.47"/>
<rect x="1335.4" y="311.6" width="1" height="0.8" fill="#7a6a3a" opacity="0.50"/>
<rect x="1353.2" y="302.8" width="1" height="0.8" fill="#7a6a3a" opacity="0.26"/>
<rect x="1348.1" y="304.0" width="1" height="1" fill="#7a6a3a" opacity="0.45"/>
<rect x="1328.2" y="318.2" width="1.5" height="0.8" fill="#7a6a3a" opacity="0.47"/>
<rect x="1351.1" y="327.8" width="1.5" height="1" fill="#7a6a3a" opacity="0.36"/>
<rect x="1338.6" y="362.3" width="1.5" height="0.8" fill="#7a6a3a" opacity="0.37"/>
<rect x="1361.5" y="344.6" width="1" height="0.8" fill="#7a6a3a" opacity="0.57"/>
<rect x="1324.2" y="341.4" width="1.5" height="0.8" fill="#7a6a3a" opacity="0.69"/>
<rect x="1351.6" y="318.1" width="1" height="0.8" fill="#7a6a3a" opacity="0.35"/>
<rect x="1340.1" y="320.7" width="1" height="0.8" fill="#7a6a3a" opacity="0.27"/>
<rect x="1334.8" y="305.4" width="1.5" height="1" fill="#7a6a3a" opacity="0.40"/>
<rect x="1357.8" y="370.0" width="1" height="1" fill="#7a6a3a" opacity="0.29"/>
<rect x="1341.9" y="316.3" width="0.8" height="1" fill="#7a6a3a" opacity="0.30"/>
<rect x="1341.5" y="303.7" width="1" height="1" fill="#7a6a3a" opacity="0.41"/>
<rect x="1359.0" y="320.4" width="1" height="1" fill="#7a6a3a" opacity="0.30"/>
<rect x="1335.2" y="339.6" width="1" height="1" fill="#7a6a3a" opacity="0.38"/>
<rect x="1330.9" y="324.2" width="0.8" height="1" fill="#7a6a3a" opacity="0.26"/>
<rect x="1348.1" y="283.9" width="0.8" height="1" fill="#7a6a3a" opacity="0.32"/>
<rect x="1355.6" y="299.7" width="1.5" height="0.8" fill="#7a6a3a" opacity="0.49"/>
<rect x="1338.4" y="305.4" width="1.5" height="1" fill="#7a6a3a" opacity="0.39"/>
<rect x="1320.5" y="345.4" width="1.5" height="0.8" fill="#7a6a3a" opacity="0.47"/>
<rect x="1335.5" y="313.0" width="0.8" height="1" fill="#7a6a3a" opacity="0.50"/>
<rect x="1334.7" y="341.8" width="1.5" height="0.8" fill="#7a6a3a" opacity="0.51"/>
<rect x="1358.4" y="315.3" width="1" height="0.8" fill="#7a6a3a" opacity="0.30"/>
<rect x="1334.2" y="326.0" width="1" height="1" fill="#7a6a3a" opacity="0.41"/>
<rect x="1359.3" y="367.8" width="1.5" height="0.8" fill="#7a6a3a" opacity="0.31"/>
<rect x="1334.1" y="335.8" width="1.5" height="0.8" fill="#7a6a3a" opacity="0.45"/>
<rect x="1337.7" y="322.3" width="1.5" height="1" fill="#7a6a3a" opacity="0.53"/>
<rect x="1362.9" y="311.4" width="0.8" height="1" fill="#7a6a3a" opacity="0.31"/>
<rect x="1346.7" y="358.8" width="0.8" height="0.8" fill="#7a6a3a" opacity="0.31"/>
<rect x="1336.5" y="347.2" width="1.5" height="1" fill="#7a6a3a" opacity="0.67"/>
<rect x="1370.2" y="322.7" width="0.8" height="1" fill="#7a6a3a" opacity="0.67"/>
<rect x="1354.4" y="332.9" width="1.5" height="1" fill="#7a6a3a" opacity="0.67"/>
<rect x="1353.0" y="342.5" width="0.8" height="0.8" fill="#7a6a3a" opacity="0.30"/>
<rect x="1361.3" y="293.2" width="0.8" height="1" fill="#7a6a3a" opacity="0.26"/>
<rect x="1349.2" y="303.2" width="1.5" height="0.8" fill="#7a6a3a" opacity="0.25"/>
<rect x="1360.2" y="344.7" width="1" height="0.8" fill="#7a6a3a" opacity="0.43"/>
<rect x="1334.1" y="345.9" width="0.8" height="0.8" fill="#7a6a3a" opacity="0.37"/>
<rect x="1326.9" y="317.5" width="1" height="1" fill="#7a6a3a" opacity="0.45"/>
<rect x="1342.5" y="371.1" width="0.8" height="0.8" fill="#7a6a3a" opacity="0.32"/>
<rect x="1339.7" y="352.8" width="1" height="0.8" fill="#7a6a3a" opacity="0.36"/>
<rect x="1334.5" y="317.2" width="1.5" height="1" fill="#7a6a3a" opacity="0.51"/>
<rect x="1350.7" y="332.4" width="0.8" height="1" fill="#7a6a3a" opacity="0.48"/>
<rect x="1339.4" y="316.5" width="0.8" height="0.8" fill="#7a6a3a" opacity="0.49"/>
<rect x="1358.7" y="346.1" width="0.8" height="1" fill="#7a6a3a" opacity="0.35"/>
<rect x="1307.5" y="361.0" width="1" height="1" fill="#7a6a3a" opacity="0.28"/>
<rect x="1361.3" y="346.9" width="0.8" height="1" fill="#7a6a3a" opacity="0.61"/>
<rect x="1342.3" y="312.2" width="0.8" height="1" fill="#7a6a3a" opacity="0.66"/>
<rect x="1312.3" y="311.7" width="0.8" height="1" fill="#7a6a3a" opacity="0.69"/>
<rect x="1343.5" y="326.6" width="0.8" height="1" fill="#7a6a3a" opacity="0.68"/>
<rect x="1333.5" y="335.3" width="0.8" height="0.8" fill="#7a6a3a" opacity="0.32"/>
<line x1="1240.0" y1="250.0" x2="1395.5" y2="210.6" stroke="#1c3a55" stroke-width="0.8" stroke-opacity="0.92"/>
<line x1="1110.0" y1="225.0" x2="1134.7" y2="154.5" stroke="#12283c" stroke-width="0.8" stroke-opacity="0.61"/>
<line x1="1200.0" y1="300.0" x2="1297.4" y2="211.4" stroke="#204060" stroke-width="0.6" stroke-opacity="0.92"/>
<line x1="1110.0" y1="225.0" x2="1147.1" y2="210.0" stroke="#173248" stroke-width="1.0" stroke-opacity="0.80"/>
<line x1="1248.0" y1="176.0" x2="1228.5" y2="228.1" stroke="#12283c" stroke-width="1.0" stroke-opacity="0.74"/>
<line x1="1080.0" y1="330.0" x2="1117.1" y2="245.9" stroke="#3a3024" stroke-width="0.6" stroke-opacity="0.79"/>
<line x1="1172.0" y1="165.0" x2="1237.0" y2="199.0" stroke="#163050" stroke-width="0.8" stroke-opacity="0.57"/>
<line x1="1150.0" y1="350.0" x2="1121.1" y2="315.9" stroke="#204060" stroke-width="1.6" stroke-opacity="0.71"/>
<line x1="1310.0" y1="215.0" x2="1408.4" y2="213.4" stroke="#12283c" stroke-width="0.8" stroke-opacity="0.57"/>
<line x1="1240.0" y1="250.0" x2="1273.1" y2="245.4" stroke="#163050" stroke-width="1.3" stroke-opacity="0.74"/>
<line x1="1330.0" y1="300.0" x2="1358.2" y2="346.3" stroke="#173248" stroke-width="0.6" stroke-opacity="0.60"/>
<line x1="1240.0" y1="250.0" x2="1210.4" y2="224.8" stroke="#12283c" stroke-width="0.8" stroke-opacity="0.65"/>
<line x1="1110.0" y1="225.0" x2="1098.0" y2="258.8" stroke="#1c3a55" stroke-width="1.6" stroke-opacity="0.75"/>
<line x1="1240.0" y1="250.0" x2="1239.4" y2="384.0" stroke="#173248" stroke-width="1.0" stroke-opacity="0.56"/>
<line x1="1310.0" y1="215.0" x2="1232.8" y2="172.0" stroke="#163050" stroke-width="1.6" stroke-opacity="0.71"/>
<line x1="1150.0" y1="350.0" x2="1243.9" y2="319.1" stroke="#163050" stroke-width="0.8" stroke-opacity="0.71"/>
<line x1="1080.0" y1="330.0" x2="1150.1" y2="323.2" stroke="#173248" stroke-width="1.0" stroke-opacity="0.61"/>
<line x1="1310.0" y1="215.0" x2="1204.5" y2="288.0" stroke="#1c3a55" stroke-width="1.0" stroke-opacity="0.79"/>
<line x1="1172.0" y1="165.0" x2="1109.9" y2="253.8" stroke="#204060" stroke-width="1.6" stroke-opacity="0.79"/>
<line x1="1172.0" y1="165.0" x2="1127.1" y2="91.5" stroke="#204060" stroke-width="1.6" stroke-opacity="0.88"/>
<line x1="1310.0" y1="215.0" x2="1268.6" y2="225.0" stroke="#204060" stroke-width="1.3" stroke-opacity="0.53"/>
<line x1="1110.0" y1="225.0" x2="1178.0" y2="212.1" stroke="#204060" stroke-width="0.6" stroke-opacity="0.54"/>
<line x1="1172.0" y1="165.0" x2="1186.2" y2="310.4" stroke="#12283c" stroke-width="1.0" stroke-opacity="0.59"/>
<line x1="1080.0" y1="330.0" x2="1143.6" y2="377.6" stroke="#12283c" stroke-width="1.3" stroke-opacity="0.89"/>
<line x1="1110.0" y1="225.0" x2="1072.7" y2="368.0" stroke="#163050" stroke-width="1.6" stroke-opacity="0.65"/>
<line x1="1200.0" y1="300.0" x2="1123.5" y2="199.2" stroke="#204060" stroke-width="0.8" stroke-opacity="0.81"/>
<line x1="1330.0" y1="300.0" x2="1382.0" y2="167.7" stroke="#42352a" stroke-width="1.0" stroke-opacity="0.82"/>
<line x1="1172.0" y1="165.0" x2="1201.0" y2="148.9" stroke="#163050" stroke-width="1.0" stroke-opacity="0.71"/>
<line x1="1310.0" y1="215.0" x2="1271.2" y2="138.3" stroke="#12283c" stroke-width="0.8" stroke-opacity="0.55"/>
<line x1="1330.0" y1="300.0" x2="1380.8" y2="246.9" stroke="#173248" stroke-width="1.0" stroke-opacity="0.94"/>
<line x1="1310.0" y1="215.0" x2="1230.0" y2="106.4" stroke="#12283c" stroke-width="1.3" stroke-opacity="0.89"/>
<line x1="1280.0" y1="350.0" x2="1313.6" y2="201.4" stroke="#42352a" stroke-width="1.3" stroke-opacity="0.60"/>
<line x1="1150.0" y1="350.0" x2="1299.1" y2="387.4" stroke="#204060" stroke-width="0.8" stroke-opacity="0.60"/>
<line x1="1310.0" y1="215.0" x2="1330.1" y2="89.4" stroke="#163050" stroke-width="1.3" stroke-opacity="0.64"/>
<line x1="1330.0" y1="300.0" x2="1317.7" y2="268.5" stroke="#1c3a55" stroke-width="0.6" stroke-opacity="0.65"/>
<line x1="1172.0" y1="165.0" x2="1232.0" y2="127.7" stroke="#163050" stroke-width="1.6" stroke-opacity="0.64"/>
<line x1="1240.0" y1="250.0" x2="1251.6" y2="174.2" stroke="#1c3a55" stroke-width="0.8" stroke-opacity="0.74"/>
<line x1="1240.0" y1="250.0" x2="1279.9" y2="267.5" stroke="#163050" stroke-width="0.6" stroke-opacity="0.71"/>
<line x1="1080.0" y1="330.0" x2="1080.1" y2="387.9" stroke="#163050" stroke-width="1.3" stroke-opacity="0.65"/>
<line x1="1248.0" y1="176.0" x2="1160.2" y2="314.8" stroke="#1c3a55" stroke-width="1.6" stroke-opacity="0.89"/>
<line x1="1080.0" y1="330.0" x2="1005.3" y2="374.5" stroke="#173248" stroke-width="0.6" stroke-opacity="0.55"/>
<line x1="1280.0" y1="350.0" x2="1192.8" y2="363.3" stroke="#163050" stroke-width="1.6" stroke-opacity="0.91"/>
<line x1="1330.0" y1="300.0" x2="1254.0" y2="254.2" stroke="#12283c" stroke-width="0.8" stroke-opacity="0.58"/>
<line x1="1172.0" y1="165.0" x2="1130.3" y2="128.1" stroke="#1c3a55" stroke-width="1.6" stroke-opacity="0.83"/>
<line x1="1150.0" y1="350.0" x2="1133.9" y2="490.7" stroke="#12283c" stroke-width="1.3" stroke-opacity="0.53"/>
<line x1="1248.0" y1="176.0" x2="1302.5" y2="159.0" stroke="#1c3a55" stroke-width="0.6" stroke-opacity="0.75"/>
<line x1="1172.0" y1="165.0" x2="1156.5" y2="291.3" stroke="#204060" stroke-width="0.8" stroke-opacity="0.95"/>
<line x1="1240.0" y1="250.0" x2="1119.7" y2="190.5" stroke="#204060" stroke-width="0.8" stroke-opacity="0.81"/>
<line x1="1310.0" y1="215.0" x2="1274.6" y2="237.9" stroke="#163050" stroke-width="0.8" stroke-opacity="0.61"/>
<line x1="1310.0" y1="215.0" x2="1278.1" y2="220.3" stroke="#12283c" stroke-width="1.3" stroke-opacity="0.83"/>
<line x1="1310.0" y1="215.0" x2="1438.8" y2="315.7" stroke="#204060" stroke-width="1.6" stroke-opacity="0.89"/>
<line x1="1248.0" y1="176.0" x2="1231.0" y2="204.4" stroke="#163050" stroke-width="1.6" stroke-opacity="0.68"/>
<line x1="1280.0" y1="350.0" x2="1318.8" y2="308.5" stroke="#12283c" stroke-width="1.0" stroke-opacity="0.70"/>
<line x1="1150.0" y1="350.0" x2="1119.4" y2="299.9" stroke="#2f2a24" stroke-width="0.6" stroke-opacity="0.69"/>
<line x1="1330.0" y1="300.0" x2="1299.4" y2="270.5" stroke="#204060" stroke-width="1.6" stroke-opacity="0.70"/>
<line x1="1280.0" y1="350.0" x2="1235.9" y2="259.5" stroke="#204060" stroke-width="0.6" stroke-opacity="0.83"/>
<line x1="1330.0" y1="300.0" x2="1345.2" y2="413.6" stroke="#163050" stroke-width="1.3" stroke-opacity="0.70"/>
<line x1="1330.0" y1="300.0" x2="1350.7" y2="436.3" stroke="#163050" stroke-width="1.0" stroke-opacity="0.75"/>
<line x1="1280.0" y1="350.0" x2="1367.8" y2="359.3" stroke="#2f2a24" stroke-width="1.3" stroke-opacity="0.60"/>
<line x1="1280.0" y1="350.0" x2="1229.7" y2="505.9" stroke="#2f2a24" stroke-width="0.6" stroke-opacity="0.87"/>
<line x1="1280.0" y1="350.0" x2="1432.5" y2="417.8" stroke="#1c3a55" stroke-width="1.6" stroke-opacity="0.72"/>
<line x1="1330.0" y1="300.0" x2="1299.8" y2="195.7" stroke="#3a3024" stroke-width="0.8" stroke-opacity="0.84"/>
<line x1="1310.0" y1="215.0" x2="1250.4" y2="332.5" stroke="#12283c" stroke-width="1.0" stroke-opacity="0.84"/>
<line x1="1150.0" y1="350.0" x2="1052.2" y2="332.4" stroke="#173248" stroke-width="1.3" stroke-opacity="0.80"/>
<line x1="1330.0" y1="300.0" x2="1467.5" y2="208.0" stroke="#3a3024" stroke-width="1.3" stroke-opacity="0.71"/>
<line x1="1080.0" y1="330.0" x2="1189.6" y2="323.9" stroke="#1c3a55" stroke-width="0.6" stroke-opacity="0.53"/>
<line x1="1330.0" y1="300.0" x2="1278.7" y2="284.8" stroke="#1c3a55" stroke-width="1.3" stroke-opacity="0.82"/>
<line x1="1110.0" y1="225.0" x2="1043.7" y2="306.7" stroke="#12283c" stroke-width="1.6" stroke-opacity="0.67"/>
<line x1="1280.0" y1="350.0" x2="1323.8" y2="409.1" stroke="#3a3024" stroke-width="0.6" stroke-opacity="0.55"/>
<line x1="1248.0" y1="176.0" x2="1226.0" y2="150.4" stroke="#173248" stroke-width="1.0" stroke-opacity="0.51"/>
<line x1="1172.0" y1="165.0" x2="1160.6" y2="133.0" stroke="#1c3a55" stroke-width="1.0" stroke-opacity="0.60"/>
<line x1="1150.0" y1="350.0" x2="1125.8" y2="276.7" stroke="#173248" stroke-width="1.0" stroke-opacity="0.51"/>
<line x1="1310.0" y1="215.0" x2="1290.2" y2="313.8" stroke="#1c3a55" stroke-width="0.8" stroke-opacity="0.75"/>
<line x1="1310.0" y1="215.0" x2="1272.7" y2="180.1" stroke="#1c3a55" stroke-width="1.3" stroke-opacity="0.90"/>
<line x1="1110.0" y1="225.0" x2="1184.1" y2="85.3" stroke="#173248" stroke-width="1.3" stroke-opacity="0.66"/>
<line x1="1150.0" y1="350.0" x2="1182.5" y2="500.1" stroke="#173248" stroke-width="0.6" stroke-opacity="0.60"/>
<line x1="1172.0" y1="165.0" x2="1251.1" y2="56.4" stroke="#163050" stroke-width="1.6" stroke-opacity="0.51"/>
<line x1="1150.0" y1="350.0" x2="1226.4" y2="371.8" stroke="#204060" stroke-width="1.3" stroke-opacity="0.53"/>
<line x1="1248.0" y1="176.0" x2="1111.4" y2="253.8" stroke="#163050" stroke-width="0.8" stroke-opacity="0.75"/>
<line x1="1172.0" y1="165.0" x2="1108.6" y2="54.6" stroke="#1c3a55" stroke-width="0.6" stroke-opacity="0.71"/>
<line x1="1330.0" y1="300.0" x2="1335.9" y2="332.3" stroke="#173248" stroke-width="0.8" stroke-opacity="0.92"/>
<line x1="1330.0" y1="300.0" x2="1327.8" y2="332.2" stroke="#1c3a55" stroke-width="0.8" stroke-opacity="0.62"/>
<line x1="1248.0" y1="176.0" x2="1270.7" y2="213.1" stroke="#163050" stroke-width="0.8" stroke-opacity="0.64"/>
<line x1="1310.0" y1="215.0" x2="1338.3" y2="127.2" stroke="#163050" stroke-width="0.8" stroke-opacity="0.69"/>
<line x1="1280.0" y1="350.0" x2="1236.4" y2="401.2" stroke="#204060" stroke-width="1.6" stroke-opacity="0.95"/>
<line x1="1200.0" y1="300.0" x2="1184.4" y2="369.7" stroke="#3a3024" stroke-width="1.6" stroke-opacity="0.71"/>
<line x1="1080.0" y1="330.0" x2="1134.7" y2="471.4" stroke="#163050" stroke-width="1.0" stroke-opacity="0.84"/>
<line x1="1240.0" y1="250.0" x2="1324.4" y2="303.9" stroke="#173248" stroke-width="1.6" stroke-opacity="0.95"/>
<line x1="1200.0" y1="300.0" x2="1257.6" y2="329.1" stroke="#1c3a55" stroke-width="1.6" stroke-opacity="0.75"/>
<line x1="1172.0" y1="165.0" x2="1238.2" y2="86.9" stroke="#12283c" stroke-width="1.6" stroke-opacity="0.95"/>
<line x1="1172.0" y1="165.0" x2="1266.7" y2="59.5" stroke="#12283c" stroke-width="1.3" stroke-opacity="0.75"/>
<line x1="1280.0" y1="350.0" x2="1190.6" y2="292.1" stroke="#12283c" stroke-width="0.8" stroke-opacity="0.53"/>
<line x1="1200.0" y1="300.0" x2="1172.3" y2="246.4" stroke="#204060" stroke-width="1.0" stroke-opacity="0.95"/>
<line x1="1310.0" y1="215.0" x2="1370.4" y2="221.8" stroke="#173248" stroke-width="1.6" stroke-opacity="0.53"/>
<line x1="1330.0" y1="300.0" x2="1247.5" y2="441.8" stroke="#163050" stroke-width="0.8" stroke-opacity="0.62"/>
<line x1="1200.0" y1="300.0" x2="1202.0" y2="262.0" stroke="#12283c" stroke-width="0.8" stroke-opacity="0.86"/>
<line x1="1172.0" y1="165.0" x2="1162.5" y2="11.2" stroke="#1c3a55" stroke-width="1.0" stroke-opacity="0.91"/>
<line x1="1110.0" y1="225.0" x2="1090.5" y2="266.8" stroke="#12283c" stroke-width="0.6" stroke-opacity="0.89"/>
<line x1="1330.0" y1="300.0" x2="1222.3" y2="397.6" stroke="#1c3a55" stroke-width="0.8" stroke-opacity="0.69"/>
<line x1="1172.0" y1="165.0" x2="1176.4" y2="233.9" stroke="#173248" stroke-width="0.6" stroke-opacity="0.53"/>
<line x1="1110.0" y1="225.0" x2="1081.8" y2="146.6" stroke="#12283c" stroke-width="1.3" stroke-opacity="0.92"/>
<line x1="1150.0" y1="350.0" x2="1111.8" y2="351.6" stroke="#204060" stroke-width="0.6" stroke-opacity="0.74"/>
<line x1="1172.0" y1="165.0" x2="1231.6" y2="218.9" stroke="#163050" stroke-width="1.0" stroke-opacity="0.75"/>
<line x1="1280.0" y1="350.0" x2="1347.3" y2="440.7" stroke="#2f2a24" stroke-width="0.6" stroke-opacity="0.72"/>
<line x1="1310.0" y1="215.0" x2="1245.1" y2="148.7" stroke="#204060" stroke-width="0.6" stroke-opacity="0.54"/>
<line x1="1172.0" y1="165.0" x2="1229.3" y2="226.0" stroke="#173248" stroke-width="1.3" stroke-opacity="0.78"/>
<line x1="1110.0" y1="225.0" x2="1119.1" y2="94.2" stroke="#12283c" stroke-width="1.0" stroke-opacity="0.87"/>
<line x1="1110.0" y1="225.0" x2="1090.6" y2="339.5" stroke="#12283c" stroke-width="0.8" stroke-opacity="0.89"/>
<line x1="1280.0" y1="350.0" x2="1359.6" y2="452.6" stroke="#173248" stroke-width="1.6" stroke-opacity="0.94"/>
<line x1="1172.0" y1="165.0" x2="1120.0" y2="130.8" stroke="#173248" stroke-width="0.8" stroke-opacity="0.70"/>
<line x1="1280.0" y1="350.0" x2="1316.6" y2="463.9" stroke="#2f2a24" stroke-width="1.3" stroke-opacity="0.68"/>
<line x1="1280.0" y1="350.0" x2="1188.0" y2="308.0" stroke="#42352a" stroke-width="0.6" stroke-opacity="0.94"/>
<line x1="1172.0" y1="165.0" x2="1198.8" y2="237.2" stroke="#12283c" stroke-width="1.3" stroke-opacity="0.90"/>
<line x1="1310.0" y1="215.0" x2="1352.1" y2="158.4" stroke="#1c3a55" stroke-width="0.8" stroke-opacity="0.57"/>
<line x1="1150.0" y1="350.0" x2="1190.1" y2="329.4" stroke="#42352a" stroke-width="1.0" stroke-opacity="0.61"/>
<line x1="1248.0" y1="176.0" x2="1198.2" y2="24.5" stroke="#173248" stroke-width="1.3" stroke-opacity="0.89"/>
<line x1="1150.0" y1="350.0" x2="1154.5" y2="304.4" stroke="#12283c" stroke-width="1.0" stroke-opacity="0.77"/>
<line x1="1310.0" y1="215.0" x2="1398.8" y2="148.7" stroke="#1c3a55" stroke-width="0.8" stroke-opacity="0.88"/>
<line x1="1330.0" y1="300.0" x2="1378.6" y2="287.6" stroke="#204060" stroke-width="0.6" stroke-opacity="0.56"/>
<line x1="1172.0" y1="165.0" x2="1070.3" y2="209.5" stroke="#173248" stroke-width="1.0" stroke-opacity="0.93"/>
<line x1="1280.0" y1="350.0" x2="1313.3" y2="436.4" stroke="#42352a" stroke-width="1.6" stroke-opacity="0.81"/>
<line x1="1200.0" y1="300.0" x2="1135.5" y2="282.5" stroke="#204060" stroke-width="1.0" stroke-opacity="0.83"/>
<line x1="1248.0" y1="176.0" x2="1278.3" y2="176.2" stroke="#1c3a55" stroke-width="1.0" stroke-opacity="0.71"/>
<line x1="1080.0" y1="330.0" x2="1054.6" y2="300.2" stroke="#173248" stroke-width="0.8" stroke-opacity="0.83"/>
<line x1="1240.0" y1="250.0" x2="1321.7" y2="214.8" stroke="#1c3a55" stroke-width="1.6" stroke-opacity="0.68"/>
<line x1="1150.0" y1="350.0" x2="1126.9" y2="212.5" stroke="#163050" stroke-width="0.8" stroke-opacity="0.91"/>
<line x1="1200.0" y1="300.0" x2="1280.2" y2="380.8" stroke="#12283c" stroke-width="0.8" stroke-opacity="0.75"/>
<line x1="1200.0" y1="300.0" x2="1088.2" y2="245.4" stroke="#12283c" stroke-width="0.6" stroke-opacity="0.56"/>
<line x1="1330.0" y1="300.0" x2="1286.9" y2="202.4" stroke="#1c3a55" stroke-width="0.6" stroke-opacity="0.79"/>
<line x1="1172.0" y1="165.0" x2="1128.4" y2="171.6" stroke="#163050" stroke-width="0.8" stroke-opacity="0.88"/>
<line x1="1110.0" y1="225.0" x2="1063.0" y2="215.6" stroke="#163050" stroke-width="1.0" stroke-opacity="0.91"/>
<line x1="1150.0" y1="350.0" x2="1087.3" y2="233.9" stroke="#204060" stroke-width="1.6" stroke-opacity="0.61"/>
<line x1="1172.0" y1="165.0" x2="1098.5" y2="15.6" stroke="#1c3a55" stroke-width="1.3" stroke-opacity="0.85"/>
<line x1="1280.0" y1="350.0" x2="1249.1" y2="356.2" stroke="#204060" stroke-width="1.3" stroke-opacity="0.77"/>
<line x1="1080.0" y1="330.0" x2="1117.2" y2="386.1" stroke="#2f2a24" stroke-width="1.0" stroke-opacity="0.81"/>
<line x1="1330.0" y1="300.0" x2="1433.0" y2="351.5" stroke="#204060" stroke-width="1.3" stroke-opacity="0.93"/>
<line x1="1240.0" y1="250.0" x2="1353.4" y2="196.2" stroke="#1c3a55" stroke-width="0.6" stroke-opacity="0.95"/>
<line x1="1172.0" y1="165.0" x2="1140.7" y2="65.1" stroke="#173248" stroke-width="1.3" stroke-opacity="0.57"/>
<line x1="1280.0" y1="350.0" x2="1330.8" y2="386.0" stroke="#173248" stroke-width="1.0" stroke-opacity="0.64"/>
<line x1="1280.0" y1="350.0" x2="1325.7" y2="311.4" stroke="#3a3024" stroke-width="1.3" stroke-opacity="0.56"/>
<line x1="1110.0" y1="225.0" x2="1211.5" y2="341.7" stroke="#12283c" stroke-width="1.6" stroke-opacity="0.80"/>
<line x1="1200.0" y1="300.0" x2="1172.3" y2="348.3" stroke="#3a3024" stroke-width="1.0" stroke-opacity="0.82"/>
<line x1="1280.0" y1="350.0" x2="1288.5" y2="305.5" stroke="#12283c" stroke-width="1.0" stroke-opacity="0.71"/>
<line x1="1200.0" y1="300.0" x2="1274.6" y2="161.2" stroke="#173248" stroke-width="1.0" stroke-opacity="0.64"/>
<line x1="1280.0" y1="350.0" x2="1311.0" y2="466.0" stroke="#12283c" stroke-width="0.8" stroke-opacity="0.93"/>
<line x1="1310.0" y1="215.0" x2="1326.2" y2="249.9" stroke="#204060" stroke-width="0.6" stroke-opacity="0.87"/>
<line x1="1200.0" y1="300.0" x2="1267.9" y2="382.0" stroke="#163050" stroke-width="0.8" stroke-opacity="0.58"/>
<line x1="1080.0" y1="330.0" x2="1058.0" y2="378.8" stroke="#1c3a55" stroke-width="1.0" stroke-opacity="0.80"/>
<line x1="1200.0" y1="300.0" x2="1154.7" y2="310.6" stroke="#3a3024" stroke-width="1.3" stroke-opacity="0.72"/>
<line x1="1240.0" y1="250.0" x2="1186.2" y2="311.4" stroke="#173248" stroke-width="0.8" stroke-opacity="0.94"/>
<line x1="1310.0" y1="215.0" x2="1310.6" y2="257.6" stroke="#163050" stroke-width="1.6" stroke-opacity="0.73"/>
<line x1="1310.0" y1="215.0" x2="1347.4" y2="80.6" stroke="#204060" stroke-width="1.3" stroke-opacity="0.61"/>
<line x1="1150.0" y1="350.0" x2="1268.3" y2="276.1" stroke="#12283c" stroke-width="1.0" stroke-opacity="0.71"/>
<line x1="1080.0" y1="330.0" x2="1161.1" y2="213.5" stroke="#173248" stroke-width="1.3" stroke-opacity="0.81"/>
<line x1="1172.0" y1="165.0" x2="1171.4" y2="239.1" stroke="#12283c" stroke-width="0.8" stroke-opacity="0.91"/>
<line x1="1330.0" y1="300.0" x2="1230.1" y2="235.2" stroke="#173248" stroke-width="1.6" stroke-opacity="0.90"/>
<line x1="1248.0" y1="176.0" x2="1112.3" y2="146.4" stroke="#204060" stroke-width="0.8" stroke-opacity="0.54"/>
<line x1="1248.0" y1="176.0" x2="1190.0" y2="252.9" stroke="#173248" stroke-width="1.0" stroke-opacity="0.92"/>
<line x1="1330.0" y1="300.0" x2="1296.8" y2="391.3" stroke="#173248" stroke-width="1.0" stroke-opacity="0.72"/>
<line x1="1172.0" y1="165.0" x2="1201.8" y2="192.9" stroke="#163050" stroke-width="1.6" stroke-opacity="0.51"/>
<line x1="1240.0" y1="250.0" x2="1143.8" y2="270.0" stroke="#1c3a55" stroke-width="0.6" stroke-opacity="0.73"/>
<line x1="1240.0" y1="250.0" x2="1139.4" y2="382.2" stroke="#1c3a55" stroke-width="1.6" stroke-opacity="0.92"/>
<line x1="1310.0" y1="215.0" x2="1365.6" y2="269.5" stroke="#12283c" stroke-width="0.8" stroke-opacity="0.75"/>
<line x1="1248.0" y1="176.0" x2="1193.0" y2="174.6" stroke="#163050" stroke-width="0.8" stroke-opacity="0.63"/>
<line x1="1150.0" y1="350.0" x2="1012.7" y2="276.8" stroke="#12283c" stroke-width="0.6" stroke-opacity="0.71"/>
<line x1="1150.0" y1="350.0" x2="1124.7" y2="304.4" stroke="#163050" stroke-width="1.6" stroke-opacity="0.84"/>
<line x1="1310.0" y1="215.0" x2="1182.8" y2="155.4" stroke="#204060" stroke-width="0.6" stroke-opacity="0.87"/>
<line x1="1172.0" y1="165.0" x2="1278.3" y2="39.1" stroke="#1c3a55" stroke-width="0.6" stroke-opacity="0.70"/>
<line x1="1240.0" y1="250.0" x2="1293.8" y2="346.4" stroke="#163050" stroke-width="1.0" stroke-opacity="0.55"/>
<line x1="1150.0" y1="350.0" x2="1159.9" y2="321.5" stroke="#163050" stroke-width="0.8" stroke-opacity="0.53"/>
<line x1="1330.0" y1="300.0" x2="1256.2" y2="201.1" stroke="#173248" stroke-width="1.6" stroke-opacity="0.79"/>
<line x1="1280.0" y1="350.0" x2="1215.8" y2="365.5" stroke="#3a3024" stroke-width="1.6" stroke-opacity="0.59"/>
<line x1="1080.0" y1="330.0" x2="984.4" y2="305.9" stroke="#173248" stroke-width="1.3" stroke-opacity="0.78"/>
<line x1="1240.0" y1="250.0" x2="1316.5" y2="101.8" stroke="#173248" stroke-width="1.3" stroke-opacity="0.92"/>
<line x1="1200.0" y1="300.0" x2="1150.6" y2="235.6" stroke="#3a3024" stroke-width="0.6" stroke-opacity="0.71"/>
<line x1="1110.0" y1="225.0" x2="1145.8" y2="201.7" stroke="#1c3a55" stroke-width="1.6" stroke-opacity="0.85"/>
<line x1="1280.0" y1="350.0" x2="1312.8" y2="341.6" stroke="#1c3a55" stroke-width="1.6" stroke-opacity="0.81"/>
<line x1="1150.0" y1="350.0" x2="1275.7" y2="327.4" stroke="#42352a" stroke-width="1.6" stroke-opacity="0.66"/>
<line x1="1172.0" y1="165.0" x2="1024.3" y2="117.0" stroke="#173248" stroke-width="1.0" stroke-opacity="0.51"/>
<line x1="1150.0" y1="350.0" x2="1157.5" y2="395.4" stroke="#2f2a24" stroke-width="1.6" stroke-opacity="0.67"/>
<line x1="1110.0" y1="225.0" x2="1141.2" y2="296.2" stroke="#204060" stroke-width="0.8" stroke-opacity="0.58"/>
<line x1="1248.0" y1="176.0" x2="1273.7" y2="254.9" stroke="#204060" stroke-width="0.6" stroke-opacity="0.83"/>
<line x1="1330.0" y1="300.0" x2="1424.7" y2="326.9" stroke="#12283c" stroke-width="1.0" stroke-opacity="0.92"/>
<line x1="1248.0" y1="176.0" x2="1348.0" y2="121.0" stroke="#163050" stroke-width="0.6" stroke-opacity="0.58"/>
<line x1="1150.0" y1="350.0" x2="1193.6" y2="485.8" stroke="#12283c" stroke-width="1.3" stroke-opacity="0.53"/>
<line x1="1310.0" y1="215.0" x2="1285.3" y2="161.9" stroke="#204060" stroke-width="1.6" stroke-opacity="0.52"/>
<line x1="1330.0" y1="300.0" x2="1314.2" y2="369.2" stroke="#204060" stroke-width="0.6" stroke-opacity="0.77"/>
<line x1="1280.0" y1="350.0" x2="1338.0" y2="377.9" stroke="#3a3024" stroke-width="1.3" stroke-opacity="0.53"/>
<line x1="1172.0" y1="165.0" x2="1148.1" y2="228.5" stroke="#1c3a55" stroke-width="1.3" stroke-opacity="0.92"/>
<line x1="1080.0" y1="330.0" x2="1071.8" y2="361.3" stroke="#42352a" stroke-width="1.3" stroke-opacity="0.54"/>
<line x1="1310.0" y1="215.0" x2="1377.8" y2="237.9" stroke="#1c3a55" stroke-width="0.8" stroke-opacity="0.55"/>
<line x1="1172.0" y1="165.0" x2="1209.6" y2="58.1" stroke="#12283c" stroke-width="1.0" stroke-opacity="0.50"/>
<line x1="1080.0" y1="330.0" x2="1047.1" y2="324.6" stroke="#12283c" stroke-width="1.6" stroke-opacity="0.79"/>
<line x1="1248.0" y1="176.0" x2="1172.9" y2="288.4" stroke="#163050" stroke-width="1.3" stroke-opacity="0.86"/>
<line x1="1110.0" y1="225.0" x2="1066.5" y2="141.0" stroke="#163050" stroke-width="1.6" stroke-opacity="0.88"/>
<line x1="1080.0" y1="330.0" x2="1143.2" y2="193.8" stroke="#12283c" stroke-width="1.6" stroke-opacity="0.74"/>
<line x1="1080.0" y1="330.0" x2="1111.0" y2="309.9" stroke="#3a3024" stroke-width="1.6" stroke-opacity="0.57"/>
<line x1="1310.0" y1="215.0" x2="1290.6" y2="369.3" stroke="#204060" stroke-width="0.6" stroke-opacity="0.83"/>
<line x1="1330.0" y1="300.0" x2="1368.3" y2="218.1" stroke="#2f2a24" stroke-width="1.3" stroke-opacity="0.90"/>
<line x1="1330.0" y1="300.0" x2="1414.6" y2="278.6" stroke="#204060" stroke-width="0.6" stroke-opacity="0.76"/>
<line x1="1080.0" y1="330.0" x2="1161.3" y2="372.8" stroke="#3a3024" stroke-width="1.6" stroke-opacity="0.90"/>
<line x1="1240.0" y1="250.0" x2="1305.7" y2="315.0" stroke="#1c3a55" stroke-width="1.6" stroke-opacity="0.80"/>
<line x1="1248.0" y1="176.0" x2="1282.7" y2="252.3" stroke="#163050" stroke-width="1.3" stroke-opacity="0.74"/>
<line x1="1110.0" y1="225.0" x2="976.9" y2="133.3" stroke="#163050" stroke-width="0.8" stroke-opacity="0.82"/>
<line x1="1200.0" y1="300.0" x2="1083.8" y2="330.0" stroke="#163050" stroke-width="1.0" stroke-opacity="0.64"/>
<line x1="1172.0" y1="165.0" x2="1282.3" y2="281.7" stroke="#12283c" stroke-width="0.8" stroke-opacity="0.54"/>
<line x1="1248.0" y1="176.0" x2="1283.4" y2="24.4" stroke="#1c3a55" stroke-width="1.6" stroke-opacity="0.55"/>
<line x1="1330.0" y1="300.0" x2="1458.2" y2="276.7" stroke="#42352a" stroke-width="1.6" stroke-opacity="0.84"/>
<line x1="1080.0" y1="330.0" x2="977.6" y2="253.1" stroke="#3a3024" stroke-width="0.8" stroke-opacity="0.60"/>
<line x1="1248.0" y1="176.0" x2="1399.7" y2="126.7" stroke="#204060" stroke-width="1.0" stroke-opacity="0.76"/>
<line x1="1248.0" y1="176.0" x2="1366.9" y2="67.7" stroke="#12283c" stroke-width="0.6" stroke-opacity="0.68"/>
<line x1="1080.0" y1="330.0" x2="1068.1" y2="232.4" stroke="#163050" stroke-width="1.3" stroke-opacity="0.88"/>
<line x1="1200.0" y1="300.0" x2="1135.4" y2="190.5" stroke="#3a3024" stroke-width="1.3" stroke-opacity="0.83"/>
<line x1="1280.0" y1="350.0" x2="1222.9" y2="363.8" stroke="#204060" stroke-width="1.6" stroke-opacity="0.82"/>
<line x1="1110.0" y1="225.0" x2="1195.7" y2="227.0" stroke="#173248" stroke-width="0.8" stroke-opacity="0.56"/>
<line x1="1280.0" y1="350.0" x2="1328.1" y2="248.1" stroke="#173248" stroke-width="0.6" stroke-opacity="0.80"/>
<line x1="1310.0" y1="215.0" x2="1343.7" y2="279.7" stroke="#173248" stroke-width="1.0" stroke-opacity="0.54"/>
<line x1="1248.0" y1="176.0" x2="1150.0" y2="313.0" stroke="#163050" stroke-width="0.6" stroke-opacity="0.80"/>
<line x1="1310.0" y1="215.0" x2="1269.9" y2="218.8" stroke="#204060" stroke-width="1.3" stroke-opacity="0.85"/>
<line x1="1310.0" y1="215.0" x2="1220.1" y2="136.4" stroke="#163050" stroke-width="1.0" stroke-opacity="0.66"/>
<line x1="1172.0" y1="165.0" x2="1125.8" y2="105.5" stroke="#204060" stroke-width="1.3" stroke-opacity="0.77"/>
<line x1="1172.0" y1="165.0" x2="1195.6" y2="-2.1" stroke="#204060" stroke-width="1.3" stroke-opacity="0.82"/>
<line x1="1080.0" y1="330.0" x2="1043.7" y2="400.4" stroke="#163050" stroke-width="1.0" stroke-opacity="0.53"/>
<line x1="1248.0" y1="176.0" x2="1128.7" y2="114.5" stroke="#12283c" stroke-width="0.6" stroke-opacity="0.77"/>
<line x1="1280.0" y1="350.0" x2="1257.3" y2="378.5" stroke="#163050" stroke-width="0.8" stroke-opacity="0.76"/>
<line x1="1330.0" y1="300.0" x2="1334.8" y2="331.6" stroke="#1c3a55" stroke-width="1.0" stroke-opacity="0.65"/>
<line x1="1080.0" y1="330.0" x2="982.4" y2="247.7" stroke="#42352a" stroke-width="1.0" stroke-opacity="0.93"/>
<line x1="1310.0" y1="215.0" x2="1359.2" y2="269.6" stroke="#204060" stroke-width="0.6" stroke-opacity="0.66"/>
<line x1="1200.0" y1="300.0" x2="1198.0" y2="152.4" stroke="#163050" stroke-width="0.8" stroke-opacity="0.87"/>
<line x1="1248.0" y1="176.0" x2="1166.6" y2="95.3" stroke="#173248" stroke-width="1.3" stroke-opacity="0.94"/>
<line x1="1080.0" y1="330.0" x2="1117.4" y2="321.5" stroke="#204060" stroke-width="0.6" stroke-opacity="0.83"/>
<line x1="1172.0" y1="165.0" x2="1168.3" y2="225.4" stroke="#1c3a55" stroke-width="1.3" stroke-opacity="0.77"/>
<line x1="1150.0" y1="350.0" x2="1245.6" y2="213.5" stroke="#163050" stroke-width="1.0" stroke-opacity="0.91"/>
<line x1="1150.0" y1="350.0" x2="1244.2" y2="409.6" stroke="#12283c" stroke-width="1.6" stroke-opacity="0.93"/>
<line x1="1110.0" y1="225.0" x2="1131.5" y2="354.3" stroke="#163050" stroke-width="0.6" stroke-opacity="0.87"/>
<line x1="1110.0" y1="225.0" x2="1253.0" y2="282.4" stroke="#204060" stroke-width="1.3" stroke-opacity="0.72"/>
<line x1="1240.0" y1="250.0" x2="1229.0" y2="216.3" stroke="#163050" stroke-width="0.6" stroke-opacity="0.92"/>
<line x1="1248.0" y1="176.0" x2="1222.2" y2="224.2" stroke="#204060" stroke-width="1.0" stroke-opacity="0.82"/>
<line x1="1310.0" y1="215.0" x2="1381.8" y2="287.7" stroke="#1c3a55" stroke-width="1.0" stroke-opacity="0.81"/>
<line x1="1330.0" y1="300.0" x2="1249.2" y2="411.9" stroke="#3a3024" stroke-width="0.6" stroke-opacity="0.93"/>
<line x1="1310.0" y1="215.0" x2="1214.1" y2="222.5" stroke="#12283c" stroke-width="1.6" stroke-opacity="0.65"/>
<line x1="1280.0" y1="350.0" x2="1348.7" y2="330.3" stroke="#3a3024" stroke-width="0.8" stroke-opacity="0.88"/>
<line x1="1110.0" y1="225.0" x2="1021.3" y2="228.5" stroke="#1c3a55" stroke-width="1.6" stroke-opacity="0.93"/>
<line x1="1150.0" y1="350.0" x2="1130.4" y2="402.9" stroke="#3a3024" stroke-width="1.0" stroke-opacity="0.77"/>
<line x1="1080.0" y1="330.0" x2="1201.9" y2="369.9" stroke="#2f2a24" stroke-width="0.8" stroke-opacity="0.61"/>
<line x1="1110.0" y1="225.0" x2="1010.5" y2="223.0" stroke="#12283c" stroke-width="0.8" stroke-opacity="0.74"/>
<line x1="1172.0" y1="165.0" x2="1235.5" y2="30.1" stroke="#173248" stroke-width="0.6" stroke-opacity="0.58"/>
<line x1="1172.0" y1="165.0" x2="1330.4" y2="167.5" stroke="#12283c" stroke-width="1.0" stroke-opacity="0.52"/>
<line x1="1280.0" y1="350.0" x2="1290.4" y2="499.1" stroke="#2f2a24" stroke-width="1.0" stroke-opacity="0.53"/>
<line x1="1240.0" y1="250.0" x2="1348.3" y2="328.0" stroke="#204060" stroke-width="0.6" stroke-opacity="0.61"/>
<line x1="1280.0" y1="350.0" x2="1310.0" y2="290.0" stroke="#163050" stroke-width="1.6" stroke-opacity="0.61"/>
<line x1="1240.0" y1="250.0" x2="1360.5" y2="209.1" stroke="#173248" stroke-width="0.8" stroke-opacity="0.56"/>
<line x1="1330.0" y1="300.0" x2="1358.0" y2="466.0" stroke="#163050" stroke-width="1.3" stroke-opacity="0.89"/>
<line x1="1080.0" y1="330.0" x2="1196.9" y2="440.6" stroke="#204060" stroke-width="1.3" stroke-opacity="0.94"/>
<line x1="1200.0" y1="300.0" x2="1263.4" y2="415.4" stroke="#3a3024" stroke-width="0.8" stroke-opacity="0.56"/>
<line x1="1248.0" y1="176.0" x2="1163.4" y2="298.2" stroke="#204060" stroke-width="1.3" stroke-opacity="0.55"/>
<line x1="1172.0" y1="165.0" x2="1203.8" y2="201.9" stroke="#163050" stroke-width="1.0" stroke-opacity="0.79"/>
<line x1="1310.0" y1="215.0" x2="1357.2" y2="270.1" stroke="#173248" stroke-width="1.3" stroke-opacity="0.72"/>
<line x1="1172.0" y1="165.0" x2="1136.8" y2="126.3" stroke="#204060" stroke-width="0.8" stroke-opacity="0.88"/>
<line x1="1200.0" y1="300.0" x2="1176.2" y2="353.1" stroke="#204060" stroke-width="1.3" stroke-opacity="0.70"/>
<line x1="1110.0" y1="225.0" x2="1087.8" y2="312.6" stroke="#1c3a55" stroke-width="0.8" stroke-opacity="0.90"/>
<line x1="1330.0" y1="300.0" x2="1295.2" y2="401.4" stroke="#163050" stroke-width="0.8" stroke-opacity="0.75"/>
<line x1="1080.0" y1="330.0" x2="1166.7" y2="367.8" stroke="#12283c" stroke-width="1.3" stroke-opacity="0.87"/>
<line x1="1248.0" y1="176.0" x2="1304.9" y2="101.2" stroke="#204060" stroke-width="0.6" stroke-opacity="0.93"/>
<line x1="1248.0" y1="176.0" x2="1169.1" y2="139.0" stroke="#173248" stroke-width="1.3" stroke-opacity="0.82"/>
<line x1="1110.0" y1="225.0" x2="1140.0" y2="253.1" stroke="#204060" stroke-width="0.6" stroke-opacity="0.56"/>
<line x1="1248.0" y1="176.0" x2="1131.4" y2="79.5" stroke="#163050" stroke-width="0.8" stroke-opacity="0.87"/>
<line x1="1310.0" y1="215.0" x2="1206.3" y2="153.7" stroke="#163050" stroke-width="0.6" stroke-opacity="0.51"/>
<line x1="1150.0" y1="350.0" x2="1015.3" y2="411.8" stroke="#173248" stroke-width="1.0" stroke-opacity="0.57"/>
<line x1="1200.0" y1="300.0" x2="1118.6" y2="268.5" stroke="#3a3024" stroke-width="0.8" stroke-opacity="0.51"/>
<line x1="1172.0" y1="165.0" x2="1293.8" y2="245.3" stroke="#204060" stroke-width="0.8" stroke-opacity="0.79"/>
<line x1="1150.0" y1="350.0" x2="1092.8" y2="320.3" stroke="#2f2a24" stroke-width="1.6" stroke-opacity="0.63"/>
<line x1="1310.0" y1="215.0" x2="1248.2" y2="189.8" stroke="#173248" stroke-width="1.0" stroke-opacity="0.83"/>
<line x1="1200.0" y1="300.0" x2="1261.0" y2="250.7" stroke="#163050" stroke-width="1.0" stroke-opacity="0.86"/>
<line x1="1172.0" y1="165.0" x2="1155.0" y2="207.6" stroke="#12283c" stroke-width="1.6" stroke-opacity="0.77"/>
<line x1="1200.0" y1="300.0" x2="1251.8" y2="323.1" stroke="#173248" stroke-width="1.3" stroke-opacity="0.62"/>
<line x1="1150.0" y1="350.0" x2="1172.6" y2="330.1" stroke="#173248" stroke-width="0.8" stroke-opacity="0.78"/>
<line x1="1310.0" y1="215.0" x2="1277.3" y2="185.5" stroke="#163050" stroke-width="1.6" stroke-opacity="0.63"/>
<line x1="1280.0" y1="350.0" x2="1365.9" y2="251.3" stroke="#173248" stroke-width="0.8" stroke-opacity="0.67"/>
<line x1="1280.0" y1="350.0" x2="1373.8" y2="457.6" stroke="#1c3a55" stroke-width="1.6" stroke-opacity="0.87"/>
<line x1="1172.0" y1="165.0" x2="1124.9" y2="67.7" stroke="#163050" stroke-width="1.6" stroke-opacity="0.61"/>
<line x1="1248.0" y1="176.0" x2="1182.4" y2="142.3" stroke="#12283c" stroke-width="1.0" stroke-opacity="0.51"/>
<line x1="1280.0" y1="350.0" x2="1187.1" y2="339.2" stroke="#173248" stroke-width="1.6" stroke-opacity="0.54"/>
<line x1="1200.0" y1="300.0" x2="1139.9" y2="167.3" stroke="#3a3024" stroke-width="0.8" stroke-opacity="0.74"/>
<line x1="1110.0" y1="225.0" x2="1001.8" y2="160.8" stroke="#163050" stroke-width="1.3" stroke-opacity="0.71"/>
<line x1="1110.0" y1="225.0" x2="1083.2" y2="316.1" stroke="#163050" stroke-width="0.8" stroke-opacity="0.62"/>
<line x1="1248.0" y1="176.0" x2="1105.0" y2="90.9" stroke="#163050" stroke-width="1.0" stroke-opacity="0.75"/>
<line x1="1200.0" y1="300.0" x2="1180.4" y2="379.8" stroke="#204060" stroke-width="1.6" stroke-opacity="0.58"/>
<line x1="1110.0" y1="225.0" x2="1208.7" y2="213.8" stroke="#1c3a55" stroke-width="1.6" stroke-opacity="0.57"/>
<line x1="1240.0" y1="250.0" x2="1267.7" y2="266.9" stroke="#163050" stroke-width="1.6" stroke-opacity="0.60"/>
<line x1="1280.0" y1="350.0" x2="1378.0" y2="345.5" stroke="#163050" stroke-width="1.6" stroke-opacity="0.62"/>
<line x1="1080.0" y1="330.0" x2="1054.2" y2="243.9" stroke="#204060" stroke-width="1.3" stroke-opacity="0.73"/>
<line x1="1150.0" y1="350.0" x2="1139.9" y2="382.3" stroke="#2f2a24" stroke-width="0.8" stroke-opacity="0.58"/>
<line x1="1080.0" y1="330.0" x2="1092.4" y2="399.8" stroke="#3a3024" stroke-width="1.3" stroke-opacity="0.53"/>
<line x1="1240.0" y1="250.0" x2="1387.4" y2="223.6" stroke="#1c3a55" stroke-width="1.3" stroke-opacity="0.63"/>
<line x1="1248.0" y1="176.0" x2="1121.1" y2="66.5" stroke="#163050" stroke-width="0.6" stroke-opacity="0.86"/>
<line x1="1310.0" y1="215.0" x2="1259.8" y2="240.7" stroke="#163050" stroke-width="1.0" stroke-opacity="0.65"/>
<line x1="1080.0" y1="330.0" x2="1104.5" y2="303.0" stroke="#173248" stroke-width="1.0" stroke-opacity="0.72"/>
<line x1="1240.0" y1="250.0" x2="1250.4" y2="340.7" stroke="#204060" stroke-width="1.0" stroke-opacity="0.77"/>
<line x1="1330.0" y1="300.0" x2="1213.4" y2="325.2" stroke="#2f2a24" stroke-width="1.6" stroke-opacity="0.82"/>
<line x1="1150.0" y1="350.0" x2="1146.3" y2="479.7" stroke="#204060" stroke-width="1.0" stroke-opacity="0.77"/>
<line x1="1310.0" y1="215.0" x2="1296.2" y2="366.2" stroke="#204060" stroke-width="1.3" stroke-opacity="0.68"/>
<line x1="1310.0" y1="215.0" x2="1407.4" y2="339.4" stroke="#204060" stroke-width="1.6" stroke-opacity="0.61"/>
<line x1="1110.0" y1="225.0" x2="1108.1" y2="182.1" stroke="#12283c" stroke-width="0.6" stroke-opacity="0.74"/>
<line x1="1330.0" y1="300.0" x2="1467.8" y2="273.1" stroke="#42352a" stroke-width="0.6" stroke-opacity="0.93"/>
<line x1="1150.0" y1="350.0" x2="1187.4" y2="353.0" stroke="#1c3a55" stroke-width="1.6" stroke-opacity="0.79"/>
<line x1="1200.0" y1="300.0" x2="1067.5" y2="215.0" stroke="#42352a" stroke-width="1.0" stroke-opacity="0.72"/>
<line x1="1248.0" y1="176.0" x2="1170.8" y2="222.0" stroke="#173248" stroke-width="0.8" stroke-opacity="0.57"/>
<line x1="1240.0" y1="250.0" x2="1223.6" y2="361.0" stroke="#12283c" stroke-width="1.6" stroke-opacity="0.61"/>
<line x1="1110.0" y1="225.0" x2="1068.3" y2="299.9" stroke="#12283c" stroke-width="0.8" stroke-opacity="0.50"/>
<line x1="1310.0" y1="215.0" x2="1297.4" y2="367.8" stroke="#12283c" stroke-width="1.0" stroke-opacity="0.61"/>
<line x1="1240.0" y1="250.0" x2="1142.6" y2="278.1" stroke="#173248" stroke-width="1.0" stroke-opacity="0.54"/>
<line x1="1248.0" y1="176.0" x2="1275.9" y2="140.2" stroke="#12283c" stroke-width="1.6" stroke-opacity="0.51"/>
<line x1="1330.0" y1="300.0" x2="1361.3" y2="192.0" stroke="#2f2a24" stroke-width="1.6" stroke-opacity="0.78"/>
<line x1="1240.0" y1="250.0" x2="1228.2" y2="193.4" stroke="#204060" stroke-width="1.6" stroke-opacity="0.61"/>
<line x1="1248.0" y1="176.0" x2="1274.2" y2="143.8" stroke="#173248" stroke-width="0.8" stroke-opacity="0.78"/>
<line x1="1330.0" y1="300.0" x2="1295.7" y2="458.4" stroke="#204060" stroke-width="1.3" stroke-opacity="0.62"/>
<line x1="1172.0" y1="165.0" x2="1086.2" y2="169.2" stroke="#12283c" stroke-width="1.3" stroke-opacity="0.80"/>
<line x1="1150.0" y1="350.0" x2="1121.7" y2="281.2" stroke="#163050" stroke-width="1.3" stroke-opacity="0.60"/>
<line x1="1150.0" y1="350.0" x2="1247.3" y2="354.1" stroke="#163050" stroke-width="1.3" stroke-opacity="0.83"/>
<line x1="1095" y1="160" x2="1140" y2="205" stroke="#2a5a9a" stroke-width="2.0" stroke-opacity="0.8" stroke-linecap="round"/>
<line x1="1175" y1="170" x2="1225" y2="225" stroke="#3a6a8a" stroke-width="1.5" stroke-opacity="0.6" stroke-linecap="round"/>
<line x1="1067" y1="185" x2="1110" y2="215" stroke="#8a2020" stroke-width="1.3" stroke-opacity="0.6" stroke-linecap="round"/>
<line x1="1325" y1="175" x2="1350" y2="157" stroke="#b02020" stroke-width="3" stroke-opacity="0.8" stroke-linecap="round"/>
<line x1="1312" y1="178" x2="1338" y2="157" stroke="#4aa0b0" stroke-width="1.3" stroke-opacity="0.7" stroke-linecap="round"/>
<line x1="1172" y1="165" x2="1080" y2="240" stroke="#1e4a70" stroke-width="1.2" stroke-opacity="0.7" stroke-linecap="round"/>
<line x1="1172" y1="165" x2="1260" y2="230" stroke="#2a5070" stroke-width="1.0" stroke-opacity="0.7" stroke-linecap="round"/>
<line x1="1248" y1="176" x2="1357" y2="200" stroke="#244a6a" stroke-width="1.0" stroke-opacity="0.7" stroke-linecap="round"/>
<line x1="1330" y1="300" x2="1357" y2="230" stroke="#3a5a7a" stroke-width="1.2" stroke-opacity="0.6" stroke-linecap="round"/>
<line x1="1160" y1="240" x2="1180" y2="260" stroke="#2a7a6a" stroke-width="3" stroke-opacity="0.5" stroke-linecap="round"/>
<line x1="1240" y1="240" x2="1250" y2="232" stroke="#9a2a4a" stroke-width="3" stroke-opacity="0.5" stroke-linecap="round"/>
<defs><linearGradient id="herobot" x1="0" y1="0" x2="0" y2="1"><stop offset="0" stop-color="#030507" stop-opacity="0"/><stop offset="1" stop-color="#030507" stop-opacity="0.75"/></linearGradient></defs>
<rect x="1067.5" y="345" width="290" height="79" fill="url(#herobot)"/>
</g>
<!-- SmartHub header -->
<text x="1067.5" y="145.8" font-size="19.5" fill="#e3a285" stroke="#0a0a0a" stroke-width="0.25" textLength="85" lengthAdjust="spacingAndGlyphs">SmartHub</text>
<path d="M1310,135 L1318.4,135 L1314.2,139.8 Z" fill="#ffffff"/>
<path d="M1347.5,134 L1354.7,141 M1354.7,134 L1347.5,141" stroke="#ffffff" stroke-width="1.6"/>
<rect x="1067" y="156.5" width="291" height="1" fill="#5a5a5a"/>
<rect x="1067" y="424" width="292" height="239" fill="#ffffff"/>

<rect id="hero-left-border" x="1067" y="157" width="1" height="266" fill="#3c3c3c"/>
<rect x="1067" y="422.5" width="292" height="2.5" fill="#2b88d8"/>
<circle cx="1302.8" cy="180" r="11.3" fill="#c8c8c8"/>
<circle cx="1302.8" cy="176.5" r="3.8" fill="#ffffff"/>
<path d="M1295.5,187.2 c1,-4.5 3.5,-6 7.3,-6 s6.3,1.5 7.3,6 a10,10 0 0 1 -14.6,0z" fill="#ffffff"/>
<g fill="#ffffff" font-weight="bold" font-size="16.5" text-anchor="middle">
<text x="1214.8" y="213.3" textLength="263" lengthAdjust="spacingAndGlyphs">Enterprise search solution for all your</text>
<text x="1214.2" y="231" textLength="55" lengthAdjust="spacingAndGlyphs">content</text>
</g>
<g fill="#ffffff" font-size="13.5" text-anchor="middle">
<text x="1214.8" y="255.6" textLength="269" lengthAdjust="spacingAndGlyphs">Smart Search is a single application that helps you</text>
<text x="1214.4" y="269.5" textLength="209" lengthAdjust="spacingAndGlyphs">find documents across all your content</text>
<text x="1214.8" y="283" textLength="212.5" lengthAdjust="spacingAndGlyphs">Use the search bar below to get started</text>
</g>
<!-- smart search logo -->
<path d="M1186.5,327 L1191.5,322 L1195,325.5 L1190,330.5 Z" fill="#ffffff"/>
<path d="M1191.5,328.5 L1198.5,321.5 L1212.5,335.5 a3.6,3.6 0 0 1 0,5.1 L1210.1,343 a3.6,3.6 0 0 1 -5.1,0 Z" fill="#ffffff"/><path d="M1191.2,328.2 L1198.2,321.2" stroke="#0a1420" stroke-width="1"/>
<circle cx="1175" cy="315.4" r="18.6" fill="#ffffff"/>
<circle cx="1175" cy="315.4" r="13.3" fill="none" stroke="#0a1420" stroke-width="2"/>
<g fill="#ffffff" font-size="15.5">
<text x="1196.8" y="314" textLength="50.8" lengthAdjust="spacingAndGlyphs">SMART</text>
<text x="1206" y="327" textLength="55" lengthAdjust="spacingAndGlyphs">SEARCH</text>
</g>
<!-- search bar -->
<rect x="1077" y="379" width="275.3" height="41.3" rx="20.6" fill="#ffffff"/>
<path d="M1093.2,396.5 L1096,399.2 L1098.8,396.5" fill="none" stroke="#2b88d8" stroke-width="1.6"/>
<text x="1115" y="404" font-size="14.5" fill="#757575" textLength="53" lengthAdjust="spacingAndGlyphs">Search...</text>
<!-- quick searches -->
<text x="1075.5" y="495.5" font-size="15" fill="#4a4a4a" textLength="139" lengthAdjust="spacingAndGlyphs">Quick searches &amp; links</text>
<rect x="1074.5" y="523" width="281" height="108" rx="6" fill="#ffffff" stroke="#e2e2e2"/>
<rect x="1075" y="630" width="280" height="1.5" fill="#d8d8d8" opacity="0.6"/>
<rect x="1074.5" y="642.5" width="281" height="40" rx="6" fill="#ffffff" stroke="#e2e2e2"/>
<text x="1150.5" y="556" font-size="14.5" font-weight="bold" fill="#333333" textLength="110" lengthAdjust="spacingAndGlyphs">Human resources</text>
<text x="1150.5" y="574" font-size="12.5" fill="#444444" textLength="139" lengthAdjust="spacingAndGlyphs">View documents related to:</text>
<g font-size="12.5" fill="#4a90d9">
<text x="1150.5" y="592" textLength="43" lengthAdjust="spacingAndGlyphs">Benefits</text>
<text x="1206" y="592" textLength="75" lengthAdjust="spacingAndGlyphs">Compensation</text>
<text x="1150.5" y="607.7" textLength="47" lengthAdjust="spacingAndGlyphs">Workday</text>
</g>
<circle cx="1200" cy="588.2" r="1.8" fill="#333"/>
<circle cx="1287" cy="588.2" r="1.8" fill="#333"/>
<!-- HR icon -->
<rect x="1096" y="556" width="41" height="41.5" rx="3" fill="#c9ab7e" stroke="#3d4b52" stroke-width="1.5"/>
<rect x="1100.5" y="560" width="32" height="22" fill="#ffffff" stroke="#3d4b52" stroke-width="1"/>
<g stroke="#8a969c" stroke-width="1"><path d="M1102,563.5 h29 M1102,566.5 h29 M1102,569.5 h29 M1102,572.5 h29 M1102,575.5 h29"/></g>
<path d="M1096.8,580 H1136.3 V594 a3,3 0 0 1 -3,3 H1099.8 a3,3 0 0 1 -3,-3 Z" fill="#f7df9a" stroke="#3d4b52" stroke-width="1.5"/>
<path d="M1108,580 v3 a2,2 0 0 0 2,2 h13 a2,2 0 0 0 2,-2 v-3" fill="#d8dcde" stroke="#3d4b52" stroke-width="1"/>

<!-- separators -->
<g fill="#4a4a4a">
<rect x="55" y="33.5" width="1" height="79"/>
<rect x="144.3" y="33.5" width="1" height="79"/>
<rect x="310" y="33.5" width="1" height="79"/>
<rect x="588" y="33.5" width="1" height="79"/>
<rect x="794.3" y="33.5" width="1" height="79"/>
<rect x="1036" y="33.5" width="1" height="79"/>
<rect x="1132" y="33.5" width="1" height="79"/>
<rect x="1184.3" y="33.5" width="1" height="79"/>
<rect x="1235.7" y="33.5" width="1" height="79"/>
<rect x="1318.2" y="33.5" width="1" height="79"/>
<rect x="557.5" y="39.8" width="1" height="21"/>
<rect x="507.2" y="68" width="1" height="21"/>
<rect x="687.2" y="68" width="1" height="21"/>
</g>
<!-- group labels -->
<g fill="#dcdcdc" font-size="9.6" transform="translate(0,-0.5)">
<text x="18.5" y="113" textLength="23" lengthAdjust="spacingAndGlyphs">Undo</text>
<text x="71.5" y="113" textLength="41.5" lengthAdjust="spacingAndGlyphs">Clipboard</text>
<text x="214.8" y="113" textLength="24.5" lengthAdjust="spacingAndGlyphs">Slides</text>
<text x="432.5" y="113" textLength="18.7" lengthAdjust="spacingAndGlyphs">Font</text>
<text x="662" y="113" textLength="44" lengthAdjust="spacingAndGlyphs">Paragraph</text>
<text x="890.8" y="113" textLength="34.5" lengthAdjust="spacingAndGlyphs">Drawing</text>
<text x="1069.3" y="113" textLength="28.8" lengthAdjust="spacingAndGlyphs">Editing</text>
<text x="1146.8" y="113" textLength="22.3" lengthAdjust="spacingAndGlyphs">Voice</text>
<text x="1191.3" y="113" textLength="37.3" lengthAdjust="spacingAndGlyphs">Designer</text>
<text x="1238.5" y="113" textLength="76.5" lengthAdjust="spacingAndGlyphs">Commands Group</text>
</g>
<!-- dialog launchers -->
<g fill="none" stroke="#747474" stroke-width="1">
<path d="M134.5,112.5 v-6 h6 M137,108.5 l4,4 M141,110 v2.5 h-2.5"/>
<path d="M578,112.5 v-6 h6 M580.5,108.5 l4,4 M584.5,110 v2.5 h-2.5"/>
<path d="M784.3,112.5 v-6 h6 M786.8,108.5 l4,4 M790.8,110 v2.5 h-2.5"/>
<path d="M1026,112.5 v-6 h6 M1028.5,108.5 l4,4 M1032.5,110 v2.5 h-2.5"/>
</g>
<!-- button labels -->
<g fill="#e8e8e8" font-size="11.2">
<text x="69.2" y="78" textLength="25" lengthAdjust="spacingAndGlyphs">Paste</text>
<text x="159.8" y="76.6" textLength="21.7" lengthAdjust="spacingAndGlyphs">New</text>
<text x="153.4" y="90.7" textLength="24" lengthAdjust="spacingAndGlyphs">Slide</text>
<text x="194.8" y="76.6" textLength="28.3" lengthAdjust="spacingAndGlyphs">Reuse</text>
<text x="194.8" y="90.7" textLength="28.3" lengthAdjust="spacingAndGlyphs">Slides</text>
<text x="250.8" y="46.7" textLength="31.7" lengthAdjust="spacingAndGlyphs">Layout</text>
<text x="250.8" y="69.6" textLength="26" lengthAdjust="spacingAndGlyphs">Reset</text>
<text x="250.8" y="92.5" textLength="35.3" lengthAdjust="spacingAndGlyphs">Section</text>
<text x="803.4" y="76.6" textLength="34" lengthAdjust="spacingAndGlyphs">Shapes</text>
<text x="842.3" y="76.6" textLength="38" lengthAdjust="spacingAndGlyphs">Arrange</text>
<text x="1065.2" y="46.7" textLength="20" lengthAdjust="spacingAndGlyphs">Find</text>
<text x="1065.3" y="69.6" textLength="37.8" lengthAdjust="spacingAndGlyphs">Replace</text>
<text x="1065.3" y="92.5" textLength="28.8" lengthAdjust="spacingAndGlyphs">Select</text>
<text x="1141.4" y="77.7" textLength="34.2" lengthAdjust="spacingAndGlyphs">Dictate</text>
<text x="1194.4" y="76.6" textLength="32.9" lengthAdjust="spacingAndGlyphs">Design</text>
<text x="1197.5" y="90.5" textLength="25.6" lengthAdjust="spacingAndGlyphs">Ideas</text>
<text x="1264.5" y="76.6" textLength="25.6" lengthAdjust="spacingAndGlyphs">Show</text>
<text x="1252.8" y="90.7" textLength="48" lengthAdjust="spacingAndGlyphs">SmartHub</text>
</g>
<g fill="#6e6e6e" font-size="11.2">
<text x="890.8" y="76.6" textLength="27" lengthAdjust="spacingAndGlyphs">Quick</text>
<text x="885.3" y="90.7" textLength="27" lengthAdjust="spacingAndGlyphs">Styles</text>
<text x="947.6" y="46.7" textLength="45.8" lengthAdjust="spacingAndGlyphs">Shape Fill</text>
<text x="947.6" y="69.6" textLength="66.5" lengthAdjust="spacingAndGlyphs">Shape Outline</text>
<text x="947.6" y="92.5" textLength="63.9" lengthAdjust="spacingAndGlyphs">Shape Effects</text>
</g>
<!-- chevrons -->
<g fill="none" stroke="#d8d8d8" stroke-width="1">
<path d="M37.8,41.5 l2.6,2.6 l2.6,-2.6"/>
<path stroke-width="1.4" d="M78.8,86.3 l2.6,2.6 l2.6,-2.6"/>
<path d="M180.5,86.8 l2.6,2.6 l2.6,-2.6"/>
<path d="M286,41.6 l2.6,2.6 l2.6,-2.6"/>
<path d="M289.8,87.4 l2.6,2.6 l2.6,-2.6"/>
<path stroke-width="1.4" d="M818,84.8 l2.6,2.6 l2.6,-2.6"/>
<path stroke-width="1.4" d="M858.8,84.8 l2.6,2.6 l2.6,-2.6"/>
<path d="M1114.2,64.8 l2.6,2.6 l2.6,-2.6"/>
<path d="M1097.6,88 l2.6,2.6 l2.6,-2.6"/>
<path stroke-width="1.4" d="M1155.6,86.3 l2.3,2.3 l2.3,-2.3"/>
<path d="M1346.5,103.8 l4.4,4.4 l4.4,-4.4"/>
</g>
<g fill="none" stroke="#7a7a7a" stroke-width="1">
<path d="M127.2,65 l2.4,2.4 l2.4,-2.4"/>
<path d="M915.8,86.8 l2.6,2.6 l2.6,-2.6"/>
<path d="M997.2,42 l2.6,2.6 l2.6,-2.6"/>
<path d="M1018.2,64.8 l2.6,2.6 l2.6,-2.6"/>
<path d="M1015.2,88 l2.6,2.6 l2.6,-2.6"/>
<path d="M456.8,78.5 l2.6,2.6 l2.6,-2.6"/>
<path d="M494.2,78.5 l2.6,2.6 l2.6,-2.6"/>
<path d="M534.4,78.5 l2.6,2.6 l2.6,-2.6"/>
<path d="M571.2,78.5 l2.6,2.6 l2.6,-2.6"/>
<path d="M621.2,49 l2.6,2.6 l2.6,-2.6"/>
<path d="M657.2,49 l2.6,2.6 l2.6,-2.6"/>
<path d="M738.2,49 l2.6,2.6 l2.6,-2.6"/>
<path d="M713.2,78 l2.6,2.6 l2.6,-2.6"/>
<path d="M775.2,42.3 l2.6,2.6 l2.6,-2.6"/>
<path d="M775.2,65.3 l2.6,2.6 l2.6,-2.6"/>
<path d="M775.2,88.2 l2.6,2.6 l2.6,-2.6"/>
<path d="M460.3,49 l2.4,2.6 l2.4,-2.6"/>
<path d="M502.5,49 l2.4,2.6 l2.4,-2.6"/>
</g>

<!-- Undo group -->
<g fill="none" stroke="#cfcfcf" stroke-width="1.1" stroke-linecap="round">
<path d="M17.5,36.6 V41.7 H22.8"/>
<path d="M17.7,41.5 L20.8,38.3 A5.3,5.3 0 0 1 28.3,45.8 L21.9,50.2"/>
</g>
<g fill="none" stroke="#9a9a9a" stroke-width="1.1">
<path d="M16.6,59.2 H21.6 V64"/>
<path d="M17.8,62 A7,7 0 1 0 27,59.9"/>
</g>
<path d="M37.9,42 L40.4,44.6 L43,42" fill="none" stroke="#e0e0e0" stroke-width="1.2"/>
<!-- Paste -->
<path d="M72.8,62 V41.2 H90 V47" fill="none" stroke="#e8a33a" stroke-width="1.7"/>
<path d="M72.8,62 H83" fill="none" stroke="#e8a33a" stroke-width="1.7"/>
<path d="M75.8,43 v-2.8 h3 a2.6,2.6 0 0 1 5.2,0 h3 v2.8 z" fill="#292929" stroke="#c8c8c8" stroke-width="1.1"/>
<rect x="83.9" y="47.8" width="11.6" height="15.6" fill="#292929" stroke="#c8c8c8" stroke-width="1.3"/>
<rect x="85.2" y="49.1" width="9" height="13" fill="none" stroke="#5a5a5a" stroke-width="0.6"/>
<!-- scissors -->
<g fill="none" stroke="#c8c8c8" stroke-width="0.9">
<path d="M110.2,36.4 L115,46.6 M115,36.4 L110.2,46.6"/>
<circle cx="110.2" cy="48.6" r="1.8"/>
<circle cx="115.2" cy="48.6" r="1.8"/>
</g>
<!-- copy -->
<g fill="none" stroke="#b8b8b8" stroke-width="1">
<path d="M110.5,59.3 H105.4 V71.2 H110.5"/>
<path d="M111.3,61.6 H116.5 L119.6,64.7 V72.6 H111.3 Z"/>
<path d="M116.5,61.6 V64.7 H119.6"/>
</g>
<rect x="113.5" y="67.2" width="3.2" height="3.2" fill="#9a9a9a"/>
<!-- format painter -->
<g fill="none" stroke="#c8c8c8" stroke-width="1">
<path d="M106,87.6 L111.2,84.3 L115.4,88.5 L112,93.8 Z"/>
<path d="M108,89.5 L112.5,92 M109,88 L113.5,90.5"/>
<path d="M113,86.2 L118.2,81 A1.1,1.1 0 0 1 119.8,82.6 L114.6,87.8"/>
</g>
<!-- New slide -->
<g fill="none" stroke="#b4b4b4">
<rect x="158.3" y="39.9" width="24.4" height="19" stroke-width="1.4"/>
<rect x="160" y="41.6" width="21" height="15.6" stroke-width="0.8" stroke="#7a7a7a"/>
<path d="M165,46.4 H181 M170.2,46.4 V57" stroke-width="1.1"/>
</g>
<rect x="170" y="40.4" width="12.5" height="2.4" fill="#b4b4b4"/>
<path d="M156,42 H170 M162.9,35 V48.5" stroke="#62b464" stroke-width="1.9"/>
<!-- Reuse slides -->
<g fill="none" stroke="#b4b4b4">
<path d="M196.8,57.6 V39.8 H220.2 V42" stroke-width="1.2"/>
<rect x="199.3" y="42.6" width="22" height="16.4" stroke-width="1.3"/>
<rect x="201.5" y="44.8" width="17.6" height="12" stroke-width="0.8" stroke="#7a7a7a"/>
</g>
<circle cx="213" cy="53" r="5.4" fill="#292929" stroke="#3a96dd" stroke-width="1.2"/>
<path d="M216.9,57 L223.3,63.2" stroke="#3a96dd" stroke-width="1.3"/>
<!-- Layout / Reset / Section small icons -->
<g fill="none" stroke="#b4b4b4">
<rect x="233.5" y="36.8" width="13.2" height="11.2" stroke-width="1.2"/>
<rect x="235.3" y="38.6" width="9.6" height="7.6" stroke-width="0.7" stroke="#7a7a7a"/>
<path d="M235.6,40.6 H244.6" stroke-width="0.9"/><rect x="236.3" y="42" width="3.3" height="3.2" stroke-width="0.8"/><rect x="240.8" y="42" width="3.3" height="3.2" stroke-width="0.8"/>
<rect x="233.5" y="59.6" width="13.2" height="11.4" stroke-width="1.2"/>
<rect x="235.3" y="61.4" width="9.6" height="7.8" stroke-width="0.7" stroke="#7a7a7a"/>
<rect x="233.5" y="84.6" width="13.2" height="11.2" stroke-width="1.2"/>
<rect x="235.3" y="86.4" width="9.6" height="7.6" stroke-width="0.7" stroke="#7a7a7a"/>
</g>
<rect x="232.9" y="81.6" width="14.4" height="2.3" fill="#5fbf6a"/>
<rect x="232.5" y="59" width="6" height="6.5" fill="#292929"/>
<path d="M233.8,62.2 L236.6,59.6 M233.8,62.2 L236.6,64.6 M233.8,62.2 H237.5 A3.2,3.2 0 0 1 240.5,65.4 V67" fill="none" stroke="#3a96dd" stroke-width="1.2"/>

<!-- Font group glyphs (disabled) -->
<g fill="#8c8c8c">
<text x="325" y="82.5" font-size="13" font-weight="bold" textLength="8" lengthAdjust="spacingAndGlyphs">B</text>
<text x="348.5" y="82.5" font-size="13" font-style="italic" font-family="Liberation Serif" textLength="6.5" lengthAdjust="spacingAndGlyphs">I</text>
<text x="369.8" y="82.3" font-size="12.5" textLength="9" lengthAdjust="spacingAndGlyphs">U</text>
<rect x="369.8" y="83.6" width="9" height="1.1"/>
<text x="393.6" y="83.6" font-size="13" font-weight="bold" fill="#5a5a5a" textLength="8" lengthAdjust="spacingAndGlyphs">S</text>
<text x="392.8" y="82.6" font-size="13" font-weight="bold" textLength="8" lengthAdjust="spacingAndGlyphs">S</text>
<text x="414" y="83" font-size="11.5" textLength="13" lengthAdjust="spacingAndGlyphs">ab</text>
<rect x="413.3" y="78.8" width="15" height="1"/>
<text x="436.3" y="80" font-size="10.8" textLength="15" lengthAdjust="spacingAndGlyphs">AV</text>
<text x="473.8" y="83" font-size="12.5" textLength="14.7" lengthAdjust="spacingAndGlyphs">Aa</text>
<text x="515.8" y="54.6" font-size="15.5" textLength="10.5" lengthAdjust="spacingAndGlyphs">A</text>
<text x="540.4" y="54.6" font-size="12" textLength="8.5" lengthAdjust="spacingAndGlyphs">A</text>
<text x="550.8" y="81.5" font-size="13" textLength="12" lengthAdjust="spacingAndGlyphs">A</text>
<rect x="550.1" y="82.2" width="13.8" height="3.5" fill="#6a6a6a"/>
<rect x="513" y="82.2" width="14.6" height="3.5" fill="#6a6a6a"/>
</g>
<g fill="none" stroke="#8c8c8c" stroke-width="1">
<path d="M437,82.8 H450.5 M437,82.8 l2,-1.6 M437,82.8 l2,1.6 M450.5,82.8 l-2,-1.6 M450.5,82.8 l-2,1.6"/>
<path d="M526.8,46 l1.6,-2 l1.6,2"/>
<path d="M549.5,44.5 l1.9,2 l1.9,-2"/>
<!-- clear formatting -->
<path d="M564,56.5 L568.8,43 L573.5,56.5 M566,51.5 H571.5"/>
<path d="M570.5,54.5 L575,50 L578,53 L573.5,57.5 Z" fill="#8c8c8c" stroke="none"/>
<path d="M571.8,55.8 l4.4,-4.4" stroke="#292929"/>
<!-- highlighter -->
<path d="M514.5,80.5 L517.5,77.5 L525.2,69.8 A1.6,1.6 0 0 1 527.5,72.1 L519.8,79.8 Z M516.5,78 l2,2"/>
</g>
<!-- Paragraph icons -->
<g fill="#8f8f8f">
<rect x="599" y="43" width="3" height="3"/><rect x="599" y="48.2" width="3" height="3"/><rect x="599" y="53.7" width="3" height="3"/>
<rect x="603.5" y="43.8" width="9.5" height="1.3"/><rect x="603.5" y="49" width="9.5" height="1.3"/><rect x="603.5" y="54.5" width="9.5" height="1.3"/>
<text x="635.5" y="47" font-size="4.2">1</text><text x="635.5" y="52.2" font-size="4.2">2</text><text x="635.5" y="57.6" font-size="4.2">3</text>
<rect x="640" y="43.8" width="9.5" height="1.3"/><rect x="640" y="49" width="9.5" height="1.3"/><rect x="640" y="54.5" width="9.5" height="1.3"/>
<!-- decrease indent -->
<rect x="673" y="43.8" width="13" height="1.3"/><rect x="680.5" y="47.3" width="5.5" height="1.3"/><rect x="680.5" y="50.9" width="5.5" height="1.3"/><rect x="673" y="54.5" width="13" height="1.3"/>
<!-- increase indent -->
<rect x="696" y="43.8" width="13" height="1.3"/><rect x="703.5" y="47.3" width="5.5" height="1.3"/><rect x="703.5" y="50.9" width="5.5" height="1.3"/><rect x="696" y="54.5" width="13" height="1.3"/>
<!-- line spacing -->
<rect x="724.4" y="43.8" width="8.6" height="1.3"/><rect x="724.4" y="47.3" width="8.6" height="1.3"/><rect x="724.4" y="50.9" width="8.6" height="1.3"/><rect x="724.4" y="54.5" width="8.6" height="1.3"/>
<!-- align left -->
<rect x="599.8" y="72.3" width="13" height="1.3"/><rect x="599.8" y="76" width="9" height="1.3"/><rect x="599.8" y="79.4" width="13" height="1.3"/><rect x="599.8" y="83" width="9" height="1.3"/>
<!-- center -->
<rect x="623" y="72.3" width="13" height="1.3"/><rect x="625" y="76" width="9" height="1.3"/><rect x="623" y="79.4" width="13" height="1.3"/><rect x="625" y="83" width="9" height="1.3"/>
<!-- right -->
<rect x="646" y="72.3" width="13" height="1.3"/><rect x="650" y="76" width="9" height="1.3"/><rect x="646" y="79.4" width="13" height="1.3"/><rect x="650" y="83" width="9" height="1.3"/>
<!-- justify -->
<rect x="669" y="72.3" width="13" height="1.3"/><rect x="669" y="76" width="13" height="1.3"/><rect x="669" y="79.4" width="13" height="1.3"/><rect x="669" y="83" width="13" height="1.3"/>
<!-- columns -->
<rect x="695" y="75" width="4.6" height="1.2"/><rect x="701.5" y="75" width="4.6" height="1.2"/>
<rect x="695" y="77.5" width="4.6" height="1.2"/><rect x="701.5" y="77.5" width="4.6" height="1.2"/>
<rect x="695" y="80.2" width="4.6" height="1.2"/><rect x="701.5" y="80.2" width="4.6" height="1.2"/>
</g>
<g fill="none" stroke="#8f8f8f" stroke-width="1.1">
<path d="M679.5,49.6 H674 M676.3,47.3 L674,49.6 L676.3,51.9"/>
<path d="M696,49.6 H701.5 M699.2,47.3 L701.5,49.6 L699.2,51.9"/>
<path d="M720.3,44 V56 M718.2,46.1 L720.3,44 L722.4,46.1 M718.2,53.9 L720.3,56 L722.4,53.9"/>
<!-- text direction -->
<path d="M757.8,36 V49.5 M755.8,47.5 L757.8,49.5 L759.8,47.5"/>
<path d="M763.5,43 V49.5 M761.5,47.5 L763.5,49.5 L765.5,47.5"/>
<path d="M760.8,42 L763.5,35.5 L766.2,42 M761.8,39.8 H765.2"/>
<!-- align text -->
<path d="M758.2,60 H755.8 V71.2 H758.2 M766.8,60 H769.2 V71.2 H766.8"/>
<path d="M757.5,65.6 H767.5 M762.5,59.5 V71.5 M760.8,61.2 L762.5,59.5 L764.2,61.2 M760.8,69.8 L762.5,71.5 L764.2,69.8"/>
<!-- smartart -->
<path d="M755.5,83.3 H763.5 L767,87 H759 Z"/>
<rect x="760.5" y="87.5" width="9.3" height="6.8"/>
<rect x="763" y="89.7" width="4.5" height="2.2" fill="#8f8f8f"/>
</g>

<!-- Shapes -->
<rect x="808" y="36.6" width="17.2" height="17.3" fill="#0f6cc4"/>
<circle cx="824.1" cy="53" r="8.5" fill="#292929" stroke="#cfcfcf" stroke-width="1.3"/>
<!-- Arrange -->
<rect x="852.8" y="40.3" width="17.8" height="18.2" fill="#e8982a"/>
<rect x="849.6" y="37.3" width="10" height="9.8" fill="#292929" stroke="#cfcfcf" stroke-width="1.3"/>
<rect x="863.8" y="51.7" width="9.8" height="9.8" fill="#292929" stroke="#cfcfcf" stroke-width="1.3"/>
<!-- Quick styles (disabled) -->
<g fill="none" stroke="#7c7c7c" stroke-width="1.2">
<path d="M904,61.4 H893.6 a2,2 0 0 1 -2,-2 V39.3 a2,2 0 0 1 2,-2 H914.2 a2,2 0 0 1 2,2 V46 M916.2,55 V59.4 a2,2 0 0 1 -2,2 H910"/>
<path d="M906.5,57.5 L916,47.2 A1.4,1.4 0 0 1 918,49.2 L908.5,59.5"/>
</g>
<path d="M906.3,57.3 L908.7,59.7 C907,62.5 904,63.5 900.5,63 C903.5,61.5 904,58.5 906.3,57.3 Z" fill="#7c7c7c"/>
<!-- Shape fill / outline / effects -->
<g fill="none" stroke="#7c7c7c" stroke-width="1.1">
<path d="M931.5,40.5 L936.5,35.8 L941.5,40.8 L936.5,45.5 Z"/>
<path d="M936,36.5 C938,34.5 941,35 942.5,37.5 L943.5,41"/>
<path d="M930.5,68 V59.5 H939.5 M942.5,64 V68"/>
<path d="M934,67.5 L942,59.5 A1.2,1.2 0 0 1 943.8,61.2 L935.8,69.3 L933.3,69.8 Z"/>
<path d="M931,88 L935.5,83.3 H942.5 a1.5,1.5 0 0 1 1.2,2.3 L939.5,92.6 a2.5,2.5 0 0 1 -2,1.2 H932.5 a2,2 0 0 1 -2,-2 Z M930.8,88.3 H939.5 L943.8,84 M939.5,88.3 V93.5"/>
</g>
<rect x="929.4" y="46.9" width="14.5" height="3" fill="#6a6a6a"/>
<rect x="929.4" y="69.6" width="14.5" height="3" fill="#6a6a6a"/>
<!-- Find -->
<g fill="none" stroke="#d2d2d2" stroke-width="1.1">
<circle cx="1056.4" cy="41.2" r="4.8"/>
<path d="M1053,44.6 L1048.2,49.4"/>
</g>
<!-- Replace -->
<text x="1051.6" y="65.8" font-size="9.5" fill="#c45fc8" textLength="5.3" lengthAdjust="spacingAndGlyphs">b</text>
<text x="1055.3" y="72.6" font-size="9" fill="#3a9ae0" textLength="4.8" lengthAdjust="spacingAndGlyphs">c</text>
<path d="M1050.8,61.2 C1048,63 1048,67.5 1052.5,69 M1051,67.2 L1053.2,69 L1051,70.8" fill="none" stroke="#3a9ae0" stroke-width="1.3"/>
<!-- Select cursor -->
<path d="M1048.9,82.5 V94 L1051.6,91.4 L1053.6,95.7 L1055.3,94.9 L1053.4,90.6 L1057.3,90.6 Z" fill="none" stroke="#d2d2d2" stroke-width="1"/>
<!-- Dictate mic -->
<rect x="1153.6" y="35.9" width="9.6" height="19" rx="4.8" fill="#0f6cc4" stroke="#4aa0e8" stroke-width="0.6"/>
<path d="M1150.2,49.5 v0.8 a8.2,8.2 0 0 0 16.4,0 v-0.8 M1158.4,58.5 V62.8" fill="none" stroke="#cfcfcf" stroke-width="1.2"/>
<!-- Design ideas -->
<g fill="none" stroke="#b4b4b4">
<rect x="1198.3" y="40.2" width="24.8" height="18.4" stroke-width="1.4"/>
<rect x="1200.2" y="42.1" width="21" height="14.6" stroke-width="0.7" stroke="#7a7a7a"/>
<path d="M1204,44.5 H1221 M1215.5,44.5 V56.5" stroke-width="1"/>
</g>
<path d="M1202.5,35 L1208.5,35 L1205,42.5 L1208.5,42.5 L1196.5,54 L1200.5,45.5 L1197,45.5 Z" fill="#f3a92b" stroke="#292929" stroke-width="0.6"/>
<!-- BA -->
<rect x="1266" y="38" width="23" height="23" fill="#3a1f7f"/>
<g fill="#ffffff">
<circle cx="1268.8" cy="48.2" r="1.4"/><circle cx="1272.6" cy="45.8" r="1.2"/><circle cx="1276.7" cy="44.3" r="1.05"/><circle cx="1280.6" cy="43.9" r="0.95"/><circle cx="1284" cy="44.6" r="0.85"/><circle cx="1286.4" cy="46.2" r="0.7"/><circle cx="1287.3" cy="48.2" r="0.55"/>
</g>
<text x="1270.2" y="58.2" font-size="10" fill="#ffffff" textLength="15.5" lengthAdjust="spacingAndGlyphs">BA</text>

</svg>
</body></html>
